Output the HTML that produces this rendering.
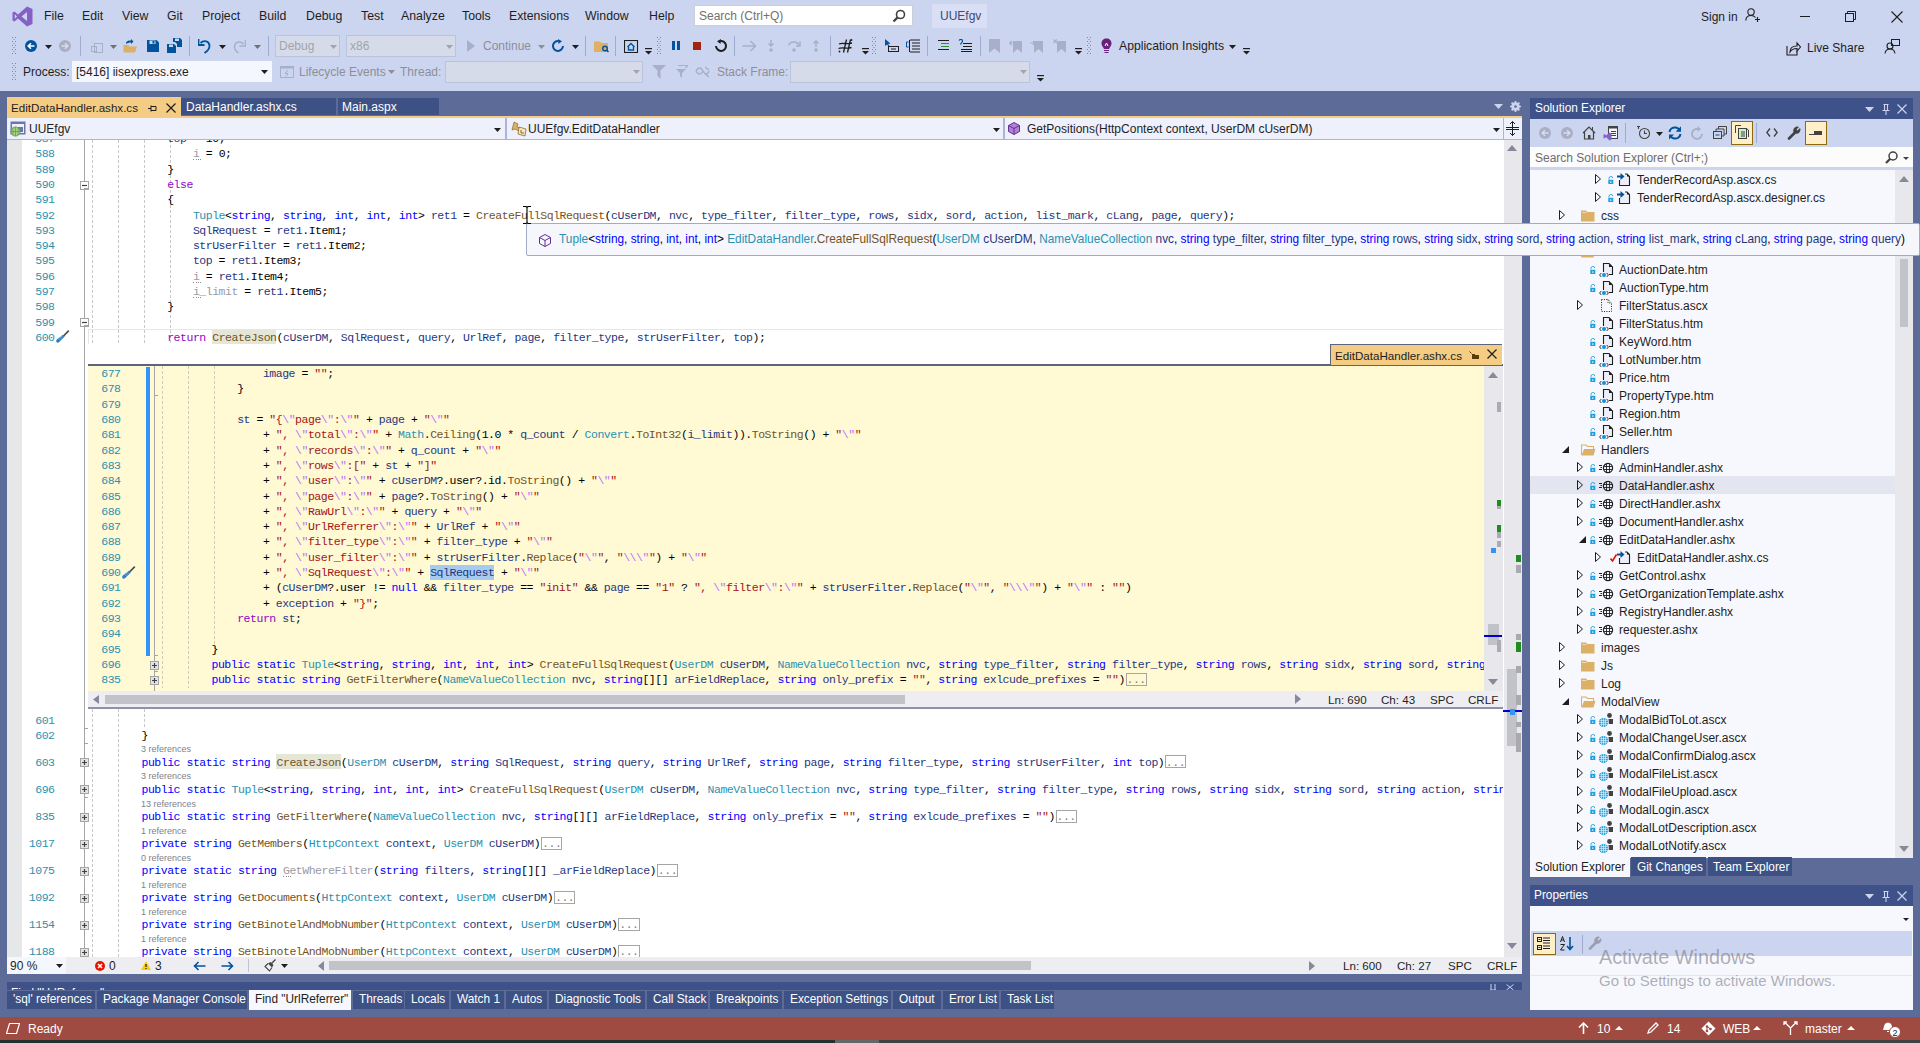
<!DOCTYPE html>
<html><head><meta charset="utf-8"><style>
html,body{margin:0;padding:0;}
body{width:1920px;height:1043px;overflow:hidden;position:relative;background:#5D6B99;font-family:"Liberation Sans", sans-serif;}
.a{position:absolute;}
.t{white-space:pre;}
.s{font-family:"Liberation Sans", sans-serif;}
.m{font-family:"Liberation Mono", monospace;}
.code{font-family:"Liberation Mono", monospace;font-size:11.5px;letter-spacing:-0.471px;white-space:pre;line-height:11.5px;}
</style></head><body>
<div class="a" style="left:0px;top:0px;width:1920px;height:91px;background:#CCD5F0;"></div><svg class="a" style="left:12px;top:6px;" width="21" height="21" viewBox="0 0 21 21"><path d="M15 0.5 L20.5 3 V18 L15 20.5 L6 12.5 L2.5 15.5 L0.5 14.5 V6.5 L2.5 5.5 L6 8.5 Z M15 6 L9.5 10.5 L15 15 Z M2.8 8.2 V12.8 L5 10.5 Z" fill="#8661C5" fill-rule="evenodd"/></svg><div class="a t s " style="left:44px;top:9.59px;font-size:12.3px;line-height:12.3px;color:#1E1E1E;">File</div><div class="a t s " style="left:82px;top:9.59px;font-size:12.3px;line-height:12.3px;color:#1E1E1E;">Edit</div><div class="a t s " style="left:122px;top:9.59px;font-size:12.3px;line-height:12.3px;color:#1E1E1E;">View</div><div class="a t s " style="left:167px;top:9.59px;font-size:12.3px;line-height:12.3px;color:#1E1E1E;">Git</div><div class="a t s " style="left:202px;top:9.59px;font-size:12.3px;line-height:12.3px;color:#1E1E1E;">Project</div><div class="a t s " style="left:259px;top:9.59px;font-size:12.3px;line-height:12.3px;color:#1E1E1E;">Build</div><div class="a t s " style="left:306px;top:9.59px;font-size:12.3px;line-height:12.3px;color:#1E1E1E;">Debug</div><div class="a t s " style="left:361px;top:9.59px;font-size:12.3px;line-height:12.3px;color:#1E1E1E;">Test</div><div class="a t s " style="left:401px;top:9.59px;font-size:12.3px;line-height:12.3px;color:#1E1E1E;">Analyze</div><div class="a t s " style="left:462px;top:9.59px;font-size:12.3px;line-height:12.3px;color:#1E1E1E;">Tools</div><div class="a t s " style="left:509px;top:9.59px;font-size:12.3px;line-height:12.3px;color:#1E1E1E;">Extensions</div><div class="a t s " style="left:585px;top:9.59px;font-size:12.3px;line-height:12.3px;color:#1E1E1E;">Window</div><div class="a t s " style="left:649px;top:9.59px;font-size:12.3px;line-height:12.3px;color:#1E1E1E;">Help</div><div class="a" style="left:694px;top:5px;width:219px;height:21px;background:#FFFFFF;box-sizing:border-box;border:1px solid #CCCEDB;"></div><div class="a t s " style="left:699px;top:9.84px;font-size:12px;line-height:12px;color:#717171;">Search (Ctrl+Q)</div><svg class="a" style="left:892px;top:9px;" width="14" height="14" viewBox="0 0 14 14"><circle cx="8.5" cy="5.5" r="4" fill="none" stroke="#424242" stroke-width="1.6"/><path d="M5.6 8.4 L1.5 12.5" stroke="#424242" stroke-width="2.2"/></svg><div class="a" style="left:932px;top:4px;width:55px;height:24px;background:#D9DFF4;"></div><div class="a t s " style="left:940px;top:9.84px;font-size:12px;line-height:12px;color:#3A4A7A;">UUEfgv</div><div class="a t s " style="left:1701px;top:10.84px;font-size:12px;line-height:12px;color:#1E1E1E;">Sign in</div><svg class="a" style="left:1745px;top:8px;" width="16" height="14" viewBox="0 0 16 14"><circle cx="6" cy="4" r="3.2" fill="none" stroke="#1E1E1E" stroke-width="1.1"/><path d="M0.8 12.5 C1 8.5 3.5 7.5 6 7.5 C8 7.5 9.5 8.2 10.5 9.5" fill="none" stroke="#1E1E1E" stroke-width="1.1"/><path d="M12.5 9 V14 M10 11.5 H15" stroke="#1E1E1E" stroke-width="1.1"/></svg><div class="a" style="left:1800px;top:16px;width:10px;height:1px;background:#1E1E1E;"></div><svg class="a" style="left:1845px;top:11px;" width="11" height="11" viewBox="0 0 11 11"><rect x="0.5" y="2.5" width="8" height="8" fill="none" stroke="#1E1E1E"/><path d="M2.5 2.5 V0.5 H10.5 V8.5 H8.5" fill="none" stroke="#1E1E1E"/></svg><svg class="a" style="left:1891px;top:11px;" width="12" height="12" viewBox="0 0 12 12"><path d="M0.5 0.5 L11.5 11.5 M11.5 0.5 L0.5 11.5" stroke="#1E1E1E" stroke-width="1.1"/></svg><svg class="a" style="left:1786px;top:41px;" width="15" height="15" viewBox="0 0 15 15"><path d="M1 5 V14 H11 V10" fill="none" stroke="#1E1E1E" stroke-width="1.1"/><path d="M4 11 C4 7 7 5 11 5 V2 L14.5 6 L11 10 V7.5 C8 7.5 5.5 8.5 4 11 Z" fill="none" stroke="#1E1E1E" stroke-width="1.1"/></svg><div class="a t s " style="left:1807px;top:41.84px;font-size:12px;line-height:12px;color:#1E1E1E;">Live Share</div><svg class="a" style="left:1884px;top:38px;" width="17" height="17" viewBox="0 0 17 17"><rect x="7.5" y="1.5" width="8" height="6" fill="none" stroke="#1E1E1E"/><circle cx="6" cy="8" r="3" fill="none" stroke="#1E1E1E" stroke-width="1.1"/><path d="M1 15.5 C1.5 12 3.5 11 6 11 C8.5 11 10.5 12 11 15.5" fill="none" stroke="#1E1E1E" stroke-width="1.1"/></svg><svg class="a" style="left:12px;top:37px;" width="5" height="18" viewBox="0 0 5 18"><rect x="0" y="0" width="1" height="1" fill="#7A86AE"/><rect x="3" y="0" width="1" height="1" fill="#7A86AE"/><rect x="1.5" y="2" width="1" height="1" fill="#7A86AE"/><rect x="0" y="4" width="1" height="1" fill="#7A86AE"/><rect x="3" y="4" width="1" height="1" fill="#7A86AE"/><rect x="1.5" y="6" width="1" height="1" fill="#7A86AE"/><rect x="0" y="8" width="1" height="1" fill="#7A86AE"/><rect x="3" y="8" width="1" height="1" fill="#7A86AE"/><rect x="1.5" y="10" width="1" height="1" fill="#7A86AE"/><rect x="0" y="12" width="1" height="1" fill="#7A86AE"/><rect x="3" y="12" width="1" height="1" fill="#7A86AE"/><rect x="1.5" y="14" width="1" height="1" fill="#7A86AE"/><rect x="0" y="16" width="1" height="1" fill="#7A86AE"/><rect x="3" y="16" width="1" height="1" fill="#7A86AE"/><rect x="1.5" y="18" width="1" height="1" fill="#7A86AE"/></svg><svg class="a" style="left:25px;top:40px;" width="12" height="12" viewBox="0 0 12 12"><circle cx="6" cy="6" r="6" fill="#00539C"/><path d="M9.5 6 H3.5 M6 3.2 L3.2 6 L6 8.8" fill="none" stroke="#fff" stroke-width="1.6"/></svg><svg class="a" style="left:45px;top:45px;" width="7" height="4" viewBox="0 0 7 4"><path d="M0 0 H7 L3.5 4 Z" fill="#1E1E1E"/></svg><svg class="a" style="left:59px;top:40px;" width="12" height="12" viewBox="0 0 12 12"><circle cx="6" cy="6" r="6" fill="#A8AFC6"/><path d="M2.5 6 H8.5 M6 3.2 L8.8 6 L6 8.8" fill="none" stroke="#D8DCEA" stroke-width="1.6"/></svg><div class="a" style="left:80px;top:36px;width:1px;height:20px;background:#A0ABD0;"></div><svg class="a" style="left:90px;top:39px;" width="14" height="14" viewBox="0 0 14 14"><rect x="4.5" y="4.5" width="8" height="9" fill="none" stroke="#A8AFC6"/><rect x="1.5" y="7.5" width="5" height="5" fill="none" stroke="#A8AFC6"/><path d="M3 1 L4 3 M1 3 L3 4" stroke="#C9CEDD"/></svg><svg class="a" style="left:110px;top:45px;" width="7" height="4" viewBox="0 0 7 4"><path d="M0 0 H7 L3.5 4 Z" fill="#717171"/></svg><svg class="a" style="left:123px;top:39px;" width="15" height="14" viewBox="0 0 15 14"><path d="M0.5 6 H5 L6.5 7.5 H14 L12 13.5 H0.5 Z" fill="#DCB067"/><path d="M3 5 C3 2 5 1.5 8 1.5 V0 L10.5 2.5 L8 5 V3.5 C6 3.5 4.5 4 3 5 Z" fill="#00539C"/></svg><svg class="a" style="left:147px;top:40px;" width="12" height="12" viewBox="0 0 12 12"><path d="M0 0 H9.5 L12 2.5 V12 H0 Z" fill="#00539C"/><rect x="2.5" y="0.5" width="6" height="3.5" fill="#CCD5F0"/><rect x="5.5" y="1" width="2" height="2.5" fill="#00539C"/></svg><svg class="a" style="left:167px;top:38px;" width="16" height="15" viewBox="0 0 16 15"><path d="M0 6 H7 L9 8 V15 H0 Z" fill="#00539C"/><path d="M6 0 H13 L15 2 V9 H10 V6 L8 4 H6 Z" fill="#00539C"/><rect x="8" y="0.5" width="4" height="2.5" fill="#CCD5F0"/><rect x="2" y="6.5" width="4" height="2.5" fill="#CCD5F0"/></svg><div class="a" style="left:189px;top:36px;width:1px;height:20px;background:#A0ABD0;"></div><svg class="a" style="left:198px;top:38px;" width="13" height="16" viewBox="0 0 13 16"><path d="M2.5 5 C6 1.5 11.5 3 11.5 8 C11.5 11 9.5 13 6.5 15" fill="none" stroke="#00539C" stroke-width="1.8"/><path d="M0.5 1 V7 H6.5" fill="none" stroke="#00539C" stroke-width="1.8"/></svg><svg class="a" style="left:219px;top:45px;" width="7" height="4" viewBox="0 0 7 4"><path d="M0 0 H7 L3.5 4 Z" fill="#1E1E1E"/></svg><svg class="a" style="left:233px;top:39px;" width="13" height="14" viewBox="0 0 13 14"><path d="M10.5 5 C7 1.5 1.5 3 1.5 8 C1.5 11 3.5 13 6.5 15" fill="none" stroke="#A8AFC6" stroke-width="1.6"/><path d="M12.5 1 V7 H6.5" fill="none" stroke="#A8AFC6" stroke-width="1.6"/></svg><svg class="a" style="left:254px;top:45px;" width="7" height="4" viewBox="0 0 7 4"><path d="M0 0 H7 L3.5 4 Z" fill="#717171"/></svg><div class="a" style="left:268px;top:36px;width:1px;height:20px;background:#A0ABD0;"></div><div class="a" style="left:275px;top:35px;width:65px;height:22px;background:#D6DBE9;box-sizing:border-box;border:1px solid #BAC2DC;"></div><div class="a t s " style="left:279px;top:40.14px;font-size:12px;line-height:12px;color:#A2A4AC;">Debug</div><svg class="a" style="left:330px;top:45px;" width="7" height="4" viewBox="0 0 7 4"><path d="M0 0 H7 L3.5 4 Z" fill="#A2A4AC"/></svg><div class="a" style="left:346px;top:35px;width:110px;height:22px;background:#D6DBE9;box-sizing:border-box;border:1px solid #BAC2DC;"></div><div class="a t s " style="left:350px;top:40.14px;font-size:12px;line-height:12px;color:#A2A4AC;">x86</div><svg class="a" style="left:446px;top:45px;" width="7" height="4" viewBox="0 0 7 4"><path d="M0 0 H7 L3.5 4 Z" fill="#A2A4AC"/></svg><svg class="a" style="left:467px;top:40px;" width="8" height="12" viewBox="0 0 8 12"><path d="M0 0 L8 6 L0 12 Z" fill="#A8AFC6"/></svg><div class="a t s " style="left:483px;top:40.14px;font-size:12px;line-height:12px;color:#8C8E98;">Continue</div><svg class="a" style="left:538px;top:45px;" width="7" height="4" viewBox="0 0 7 4"><path d="M0 0 H7 L3.5 4 Z" fill="#8C8E98"/></svg><svg class="a" style="left:552px;top:39px;" width="14" height="14" viewBox="0 0 14 14"><path d="M11 7 A5 5 0 1 1 7 2" fill="none" stroke="#00539C" stroke-width="2"/><path d="M6 0 L10 2.2 L6.5 5 Z" fill="#00539C"/></svg><svg class="a" style="left:572px;top:45px;" width="7" height="4" viewBox="0 0 7 4"><path d="M0 0 H7 L3.5 4 Z" fill="#1E1E1E"/></svg><div class="a" style="left:585px;top:36px;width:1px;height:20px;background:#A0ABD0;"></div><svg class="a" style="left:594px;top:40px;" width="16" height="13" viewBox="0 0 16 13"><path d="M0 1.5 H6 L7.5 3 H14 V12 H0 Z" fill="#DCB067"/><circle cx="11" cy="8.5" r="2.3" fill="none" stroke="#00539C" stroke-width="1.4"/><path d="M12.5 10 L14.5 12" stroke="#00539C" stroke-width="1.6"/></svg><div class="a" style="left:615px;top:36px;width:1px;height:20px;background:#A0ABD0;"></div><svg class="a" style="left:624px;top:40px;" width="15" height="13" viewBox="0 0 15 13"><rect x="0.5" y="0.5" width="13" height="12" fill="none" stroke="#1E1E1E" stroke-width="1.1"/><path d="M3.5 7 L7 3.5 L10.5 7 M4.5 6 V10 H9.5 V6" fill="none" stroke="#00539C" stroke-width="1.4"/></svg><svg class="a" style="left:645px;top:48px;" width="7" height="7" viewBox="0 0 7 7"><rect x="0" y="0" width="7" height="1.2" fill="#1E1E1E"/><path d="M0 3 H7 L3.5 6.5 Z" fill="#1E1E1E"/></svg><svg class="a" style="left:657px;top:37px;" width="5" height="18" viewBox="0 0 5 18"><rect x="0" y="0" width="1" height="1" fill="#7A86AE"/><rect x="3" y="0" width="1" height="1" fill="#7A86AE"/><rect x="1.5" y="2" width="1" height="1" fill="#7A86AE"/><rect x="0" y="4" width="1" height="1" fill="#7A86AE"/><rect x="3" y="4" width="1" height="1" fill="#7A86AE"/><rect x="1.5" y="6" width="1" height="1" fill="#7A86AE"/><rect x="0" y="8" width="1" height="1" fill="#7A86AE"/><rect x="3" y="8" width="1" height="1" fill="#7A86AE"/><rect x="1.5" y="10" width="1" height="1" fill="#7A86AE"/><rect x="0" y="12" width="1" height="1" fill="#7A86AE"/><rect x="3" y="12" width="1" height="1" fill="#7A86AE"/><rect x="1.5" y="14" width="1" height="1" fill="#7A86AE"/><rect x="0" y="16" width="1" height="1" fill="#7A86AE"/><rect x="3" y="16" width="1" height="1" fill="#7A86AE"/><rect x="1.5" y="18" width="1" height="1" fill="#7A86AE"/></svg><div class="a" style="left:672px;top:41px;width:3px;height:9px;background:#00539C;"></div><div class="a" style="left:677px;top:41px;width:3px;height:9px;background:#00539C;"></div><div class="a" style="left:693px;top:42px;width:8px;height:8px;background:#A1260D;"></div><svg class="a" style="left:713px;top:39px;" width="14" height="14" viewBox="0 0 14 14"><path d="M3 7 A5 5 0 1 0 7 2" fill="none" stroke="#1E1E1E" stroke-width="2"/><path d="M8 0 L4 2.2 L7.5 5 Z" fill="#1E1E1E"/></svg><div class="a" style="left:734px;top:36px;width:1px;height:20px;background:#A0ABD0;"></div><svg class="a" style="left:742px;top:40px;" width="15" height="12" viewBox="0 0 15 12"><path d="M0.5 6 H13.5 M8.5 1 L13.5 6 L8.5 11" fill="none" stroke="#A8AFC6" stroke-width="1.5"/></svg><svg class="a" style="left:767px;top:40px;" width="8" height="12" viewBox="0 0 8 12"><path d="M4 0 V6 M1.5 3.5 L4 6 L6.5 3.5" fill="none" stroke="#A8AFC6" stroke-width="1.5"/><circle cx="4" cy="10" r="1.8" fill="#A8AFC6"/></svg><svg class="a" style="left:788px;top:40px;" width="13" height="12" viewBox="0 0 13 12"><path d="M0.5 5.5 C2 1 9 1 11 5" fill="none" stroke="#A8AFC6" stroke-width="1.5"/><path d="M12 1.5 V6 H8" fill="none" stroke="#A8AFC6" stroke-width="1.5"/><circle cx="6" cy="10" r="1.8" fill="#A8AFC6"/></svg><svg class="a" style="left:812px;top:40px;" width="8" height="12" viewBox="0 0 8 12"><path d="M4 7 V1 M1.5 3.5 L4 1 L6.5 3.5" fill="none" stroke="#A8AFC6" stroke-width="1.5"/><circle cx="4" cy="10" r="1.8" fill="#A8AFC6"/></svg><div class="a" style="left:830px;top:36px;width:1px;height:20px;background:#A0ABD0;"></div><svg class="a" style="left:838px;top:39px;" width="15" height="14" viewBox="0 0 15 14"><path d="M5.5 13.5 L8.5 0.5 M9.5 13.5 L12.5 0.5 M1 5 C4 3.5 8 5.5 14 4 M0.5 9.5 C4 8 8 10 13.5 8.5" fill="none" stroke="#1E1E1E" stroke-width="1.3"/><circle cx="1.5" cy="12.5" r="0.9" fill="#1E1E1E"/><circle cx="13.5" cy="1" r="0.9" fill="#1E1E1E"/></svg><svg class="a" style="left:862px;top:48px;" width="7" height="7" viewBox="0 0 7 7"><rect x="0" y="0" width="7" height="1.2" fill="#1E1E1E"/><path d="M0 3 H7 L3.5 6.5 Z" fill="#1E1E1E"/></svg><svg class="a" style="left:872px;top:37px;" width="5" height="18" viewBox="0 0 5 18"><rect x="0" y="0" width="1" height="1" fill="#7A86AE"/><rect x="3" y="0" width="1" height="1" fill="#7A86AE"/><rect x="1.5" y="2" width="1" height="1" fill="#7A86AE"/><rect x="0" y="4" width="1" height="1" fill="#7A86AE"/><rect x="3" y="4" width="1" height="1" fill="#7A86AE"/><rect x="1.5" y="6" width="1" height="1" fill="#7A86AE"/><rect x="0" y="8" width="1" height="1" fill="#7A86AE"/><rect x="3" y="8" width="1" height="1" fill="#7A86AE"/><rect x="1.5" y="10" width="1" height="1" fill="#7A86AE"/><rect x="0" y="12" width="1" height="1" fill="#7A86AE"/><rect x="3" y="12" width="1" height="1" fill="#7A86AE"/><rect x="1.5" y="14" width="1" height="1" fill="#7A86AE"/><rect x="0" y="16" width="1" height="1" fill="#7A86AE"/><rect x="3" y="16" width="1" height="1" fill="#7A86AE"/><rect x="1.5" y="18" width="1" height="1" fill="#7A86AE"/></svg><svg class="a" style="left:884px;top:39px;" width="15" height="14" viewBox="0 0 15 14"><path d="M1 0 L1 7 L3 5.5 L5 8 L6 7.3 L4 5 L6.5 4.5 Z" fill="#00539C"/><rect x="4.5" y="7.5" width="10" height="5" fill="none" stroke="#1E1E1E"/><path d="M7 10 H12" stroke="#1E1E1E"/></svg><svg class="a" style="left:906px;top:39px;" width="15" height="14" viewBox="0 0 15 14"><path d="M4 1 H14 M6 4 H14 M6 7 H14 M6 10 H14 M4 13 H14 M3.5 1 V13" fill="none" stroke="#1E1E1E" stroke-width="1"/><path d="M0.5 3 V8 H2.5 M0.5 3 H2.5" fill="none" stroke="#00539C"/></svg><div class="a" style="left:927px;top:36px;width:1px;height:20px;background:#A0ABD0;"></div><svg class="a" style="left:938px;top:40px;" width="11" height="11" viewBox="0 0 11 11"><path d="M0 0.5 H11 M3 3.5 H11 M3 6.5 H11 M0 9.5 H11" stroke="#1E1E1E"/><path d="M3 3.5 H11 M3 6.5 H11" stroke="#388A34"/></svg><svg class="a" style="left:958px;top:39px;" width="14" height="13" viewBox="0 0 14 13"><path d="M5 4.5 H14 M5 7.5 H14 M3 10.5 H14 M3 12.5 H14" stroke="#1E1E1E"/><path d="M1 1.5 C2 0 4.5 0 4.5 2 C4.5 3.5 3 4 2.5 5.5" fill="none" stroke="#00539C" stroke-width="1.2"/></svg><div class="a" style="left:980px;top:36px;width:1px;height:20px;background:#A0ABD0;"></div><svg class="a" style="left:989px;top:39px;" width="11" height="14" viewBox="0 0 11 14"><path d="M0 0 H11 V14 L5.5 9.5 L0 14 Z" fill="#A8AFC6"/></svg><svg class="a" style="left:1009px;top:39px;" width="13" height="14" viewBox="0 0 13 14"><path d="M4 2 H13 V14 L8.5 10 L4 14 Z" fill="#A8AFC6"/><path d="M0.5 4 H5 M2.5 2 L0.5 4 L2.5 6" fill="none" stroke="#A8AFC6" stroke-width="1.2"/></svg><svg class="a" style="left:1030px;top:39px;" width="13" height="14" viewBox="0 0 13 14"><path d="M4 2 H13 V14 L8.5 10 L4 14 Z" fill="#A8AFC6"/><path d="M0 4 H5 M3 2 L5 4 L3 6" fill="none" stroke="#A8AFC6" stroke-width="1.2"/></svg><svg class="a" style="left:1053px;top:39px;" width="13" height="14" viewBox="0 0 13 14"><path d="M4 2 H13 V14 L8.5 10 L4 14 Z" fill="#A8AFC6"/><path d="M0.5 0.5 L4 4 M4 0.5 L0.5 4" fill="none" stroke="#A8AFC6" stroke-width="1.2"/></svg><svg class="a" style="left:1075px;top:48px;" width="7" height="7" viewBox="0 0 7 7"><rect x="0" y="0" width="7" height="1.2" fill="#1E1E1E"/><path d="M0 3 H7 L3.5 6.5 Z" fill="#1E1E1E"/></svg><svg class="a" style="left:1087px;top:37px;" width="5" height="18" viewBox="0 0 5 18"><rect x="0" y="0" width="1" height="1" fill="#7A86AE"/><rect x="3" y="0" width="1" height="1" fill="#7A86AE"/><rect x="1.5" y="2" width="1" height="1" fill="#7A86AE"/><rect x="0" y="4" width="1" height="1" fill="#7A86AE"/><rect x="3" y="4" width="1" height="1" fill="#7A86AE"/><rect x="1.5" y="6" width="1" height="1" fill="#7A86AE"/><rect x="0" y="8" width="1" height="1" fill="#7A86AE"/><rect x="3" y="8" width="1" height="1" fill="#7A86AE"/><rect x="1.5" y="10" width="1" height="1" fill="#7A86AE"/><rect x="0" y="12" width="1" height="1" fill="#7A86AE"/><rect x="3" y="12" width="1" height="1" fill="#7A86AE"/><rect x="1.5" y="14" width="1" height="1" fill="#7A86AE"/><rect x="0" y="16" width="1" height="1" fill="#7A86AE"/><rect x="3" y="16" width="1" height="1" fill="#7A86AE"/><rect x="1.5" y="18" width="1" height="1" fill="#7A86AE"/></svg><svg class="a" style="left:1101px;top:38px;" width="11" height="16" viewBox="0 0 11 16"><path d="M5.5 0.5 C8.5 0.5 10.5 2.5 10.5 5.5 C10.5 8 8.5 9 8 11 H3 C2.5 9 0.5 8 0.5 5.5 C0.5 2.5 2.5 0.5 5.5 0.5 Z" fill="#68217A"/><path d="M3 12.5 H8 M3.5 14.5 H7.5" stroke="#68217A" stroke-width="1.2"/><path d="M4 8 L5.5 5 L7 8" fill="none" stroke="#fff"/></svg><div class="a t s " style="left:1119px;top:39.97px;font-size:12.2px;line-height:12.2px;color:#1E1E1E;">Application Insights</div><svg class="a" style="left:1229px;top:45px;" width="7" height="4" viewBox="0 0 7 4"><path d="M0 0 H7 L3.5 4 Z" fill="#1E1E1E"/></svg><svg class="a" style="left:1243px;top:48px;" width="7" height="7" viewBox="0 0 7 7"><rect x="0" y="0" width="7" height="1.2" fill="#1E1E1E"/><path d="M0 3 H7 L3.5 6.5 Z" fill="#1E1E1E"/></svg><svg class="a" style="left:12px;top:63px;" width="5" height="18" viewBox="0 0 5 18"><rect x="0" y="0" width="1" height="1" fill="#7A86AE"/><rect x="3" y="0" width="1" height="1" fill="#7A86AE"/><rect x="1.5" y="2" width="1" height="1" fill="#7A86AE"/><rect x="0" y="4" width="1" height="1" fill="#7A86AE"/><rect x="3" y="4" width="1" height="1" fill="#7A86AE"/><rect x="1.5" y="6" width="1" height="1" fill="#7A86AE"/><rect x="0" y="8" width="1" height="1" fill="#7A86AE"/><rect x="3" y="8" width="1" height="1" fill="#7A86AE"/><rect x="1.5" y="10" width="1" height="1" fill="#7A86AE"/><rect x="0" y="12" width="1" height="1" fill="#7A86AE"/><rect x="3" y="12" width="1" height="1" fill="#7A86AE"/><rect x="1.5" y="14" width="1" height="1" fill="#7A86AE"/><rect x="0" y="16" width="1" height="1" fill="#7A86AE"/><rect x="3" y="16" width="1" height="1" fill="#7A86AE"/><rect x="1.5" y="18" width="1" height="1" fill="#7A86AE"/></svg><div class="a t s " style="left:23px;top:65.84px;font-size:12px;line-height:12px;color:#1E1E1E;">Process:</div><div class="a" style="left:72px;top:61px;width:200px;height:21px;background:#F5F7FE;"></div><div class="a t s " style="left:76px;top:65.84px;font-size:12px;line-height:12px;color:#1E1E1E;">[5416] iisexpress.exe</div><svg class="a" style="left:261px;top:70px;" width="7" height="4" viewBox="0 0 7 4"><path d="M0 0 H7 L3.5 4 Z" fill="#1E1E1E"/></svg><svg class="a" style="left:280px;top:66px;" width="14" height="12" viewBox="0 0 14 12"><rect x="0.5" y="0.5" width="13" height="11" fill="none" stroke="#A8AFC6"/><rect x="0.5" y="0.5" width="13" height="2" fill="#A8AFC6"/><path d="M8 4 L5 7.5 H8 L6 10.5" fill="none" stroke="#A8AFC6"/></svg><div class="a t s " style="left:299px;top:65.84px;font-size:12px;line-height:12px;color:#8C8E98;">Lifecycle Events</div><svg class="a" style="left:388px;top:70px;" width="7" height="4" viewBox="0 0 7 4"><path d="M0 0 H7 L3.5 4 Z" fill="#8C8E98"/></svg><div class="a t s " style="left:400px;top:65.84px;font-size:12px;line-height:12px;color:#8C8E98;">Thread:</div><div class="a" style="left:445px;top:61px;width:198px;height:22px;background:#D6DBE9;box-sizing:border-box;border:1px solid #BAC2DC;"></div><svg class="a" style="left:633px;top:70px;" width="7" height="4" viewBox="0 0 7 4"><path d="M0 0 H7 L3.5 4 Z" fill="#A2A4AC"/></svg><svg class="a" style="left:652px;top:65px;" width="14" height="14" viewBox="0 0 14 14"><path d="M0 0 H14 L8.5 5.5 V14 L5.5 11 V5.5 Z" fill="#A8AFC6"/></svg><svg class="a" style="left:673px;top:65px;" width="15" height="14" viewBox="0 0 15 14"><path d="M3 4 H13 L9 8 V13 L7 11 V8 Z" fill="#A8AFC6"/><path d="M5 0.5 H15 L12.5 3" fill="none" stroke="#A8AFC6" stroke-width="1.2"/></svg><svg class="a" style="left:695px;top:66px;" width="15" height="12" viewBox="0 0 15 12"><path d="M1 5 C3 1 6 1 8 5 C10 9 13 9 14 5 M1 5 C3 9 6 9 8 5 M10 1 L14 4 M10 8 L14 11" fill="none" stroke="#A8AFC6" stroke-width="1.4"/></svg><div class="a t s " style="left:717px;top:65.84px;font-size:12px;line-height:12px;color:#8C8E98;">Stack Frame:</div><div class="a" style="left:790px;top:61px;width:240px;height:22px;background:#D6DBE9;box-sizing:border-box;border:1px solid #BAC2DC;"></div><svg class="a" style="left:1020px;top:70px;" width="7" height="4" viewBox="0 0 7 4"><path d="M0 0 H7 L3.5 4 Z" fill="#A2A4AC"/></svg><svg class="a" style="left:1037px;top:75px;" width="7" height="7" viewBox="0 0 7 7"><rect x="0" y="0" width="7" height="1.2" fill="#1E1E1E"/><path d="M0 3 H7 L3.5 6.5 Z" fill="#1E1E1E"/></svg><div class="a" style="left:7px;top:97px;width:174px;height:21px;background:#F5CC84;"></div><div class="a t s " style="left:11px;top:102.18px;font-size:11.6px;line-height:11.6px;color:#1E1E1E;">EditDataHandler.ashx.cs</div><svg class="a" style="left:148px;top:105px;" width="9" height="7" viewBox="0 0 9 7"><path d="M0 3.5 H3 M3 0.5 V6.5 M3 1.5 H8 V5.5 H3" fill="none" stroke="#1E1E1E"/></svg><svg class="a" style="left:166px;top:103px;" width="10" height="10" viewBox="0 0 10 10"><path d="M0.5 0.5 L9.5 9.5 M9.5 0.5 L0.5 9.5" stroke="#1E1E1E" stroke-width="1.2"/></svg><div class="a" style="left:181px;top:98px;width:155px;height:17px;background:#3D5184;"></div><div class="a t s " style="left:186px;top:100.84px;font-size:12px;line-height:12px;color:#FFFFFF;">DataHandler.ashx.cs</div><div class="a" style="left:338px;top:98px;width:101px;height:17px;background:#3D5184;"></div><div class="a t s " style="left:342px;top:100.84px;font-size:12px;line-height:12px;color:#FFFFFF;">Main.aspx</div><svg class="a" style="left:1494px;top:104px;" width="9" height="5" viewBox="0 0 9 5"><path d="M0 0 H9 L4.5 5 Z" fill="#CED4EE"/></svg><svg class="a" style="left:1510px;top:101px;" width="11" height="11" viewBox="0 0 11 11"><circle cx="5.5" cy="5.5" r="3.2" fill="none" stroke="#CED4EE" stroke-width="2.2"/><path d="M5.5 0 V11 M0 5.5 H11 M1.6 1.6 L9.4 9.4 M9.4 1.6 L1.6 9.4" stroke="#CED4EE" stroke-width="1.6"/><circle cx="5.5" cy="5.5" r="1.3" fill="#5D6B99"/></svg><div class="a" style="left:7px;top:116px;width:1515px;height:2px;background:#F5CC84;"></div><div class="a" style="left:7px;top:118px;width:1515px;height:22px;background:#EEF1FB;"></div><div class="a" style="left:7px;top:139px;width:1515px;height:1px;background:#A9B6DA;"></div><div class="a" style="left:505px;top:118px;width:2px;height:21px;background:#A9B6DA;"></div><div class="a" style="left:1003px;top:118px;width:2px;height:21px;background:#A9B6DA;"></div><div class="a" style="left:1503px;top:118px;width:1px;height:21px;background:#A9B6DA;"></div><svg class="a" style="left:9px;top:120px;" width="18" height="17" viewBox="0 0 18 17"><rect x="1.5" y="1.5" width="15" height="13" fill="#6C76A8"/><rect x="3" y="4" width="12" height="9" fill="#EEF1FB"/><rect x="9" y="7" width="5" height="5" fill="#6C76A8"/><circle cx="6.5" cy="11.5" r="4.6" fill="#A6D58A" stroke="#5C9A46" stroke-width="0.9"/><path d="M2 11.5 H11 M6.5 7 V16 M4 7.8 V15.2 M9 7.8 V15.2" stroke="#5C9A46" stroke-width="0.7"/></svg><div class="a t s " style="left:29px;top:123.24px;font-size:12px;line-height:12px;color:#1E1E1E;">UUEfgv</div><svg class="a" style="left:494px;top:128px;" width="7" height="4" viewBox="0 0 7 4"><path d="M0 0 H7 L3.5 4 Z" fill="#1E1E1E"/></svg><svg class="a" style="left:511px;top:121px;" width="17" height="16" viewBox="0 0 17 16"><path d="M3 1 L7 3 L6 6 L9 7 L8 10 L4 8 L1 9 Z" fill="#DCB067" stroke="#8C6A2A" stroke-width="0.7"/><path d="M8 6 L15 8 L14 15 L7 13 Z" fill="#F5E7C4" stroke="#8C6A2A" stroke-width="0.8"/><path d="M10 9 V12 H13" fill="none" stroke="#8C6A2A"/></svg><div class="a t s " style="left:528px;top:123.24px;font-size:12px;line-height:12px;color:#1E1E1E;">UUEfgv.EditDataHandler</div><svg class="a" style="left:993px;top:128px;" width="7" height="4" viewBox="0 0 7 4"><path d="M0 0 H7 L3.5 4 Z" fill="#1E1E1E"/></svg><svg class="a" style="left:1008px;top:122px;" width="12" height="13" viewBox="0 0 12 13"><path d="M6 0.5 L11.5 3.5 V9.5 L6 12.5 L0.5 9.5 V3.5 Z" fill="#B180D7" stroke="#652D90"/><path d="M0.5 3.5 L6 6.5 L11.5 3.5 M6 6.5 V12.5" fill="none" stroke="#652D90"/></svg><div class="a t s " style="left:1027px;top:123.24px;font-size:12px;line-height:12px;color:#1E1E1E;">GetPositions(HttpContext context, UserDM cUserDM)</div><svg class="a" style="left:1493px;top:128px;" width="7" height="4" viewBox="0 0 7 4"><path d="M0 0 H7 L3.5 4 Z" fill="#1E1E1E"/></svg><svg class="a" style="left:1506px;top:121px;" width="13" height="15" viewBox="0 0 13 15"><path d="M0 6.5 H13 M0 8.5 H13 M6.5 0.5 V14.5 M4 3 L6.5 0.5 L9 3 M4 12 L6.5 14.5 L9 12" fill="none" stroke="#1E1E1E" stroke-width="1"/></svg><div class="a" style="left:7px;top:140px;width:1497px;height:817px;background:#FFFFFF;"></div><div class="a" style="left:7px;top:140px;width:15px;height:817px;background:#E6E7E8;"></div><div class="a" style="left:1504px;top:140px;width:18px;height:817px;background:#E8E8EC;"></div><div class="a" style="left:0;top:140px;width:1503px;height:204px;overflow:hidden;"><div class="a" style="left:88px;top:189px;width:1415px;height:15px;box-sizing:border-box;border:1px solid #E5E5EF;border-right:none;border-bottom:none;"></div><div class="a" style="left:92px;top:0px;width:1px;height:204px;background:repeating-linear-gradient(to bottom,#C8C8C8 0,#C8C8C8 3px,transparent 3px,transparent 5px);"></div><div class="a" style="left:118px;top:0px;width:1px;height:204px;background:repeating-linear-gradient(to bottom,#C8C8C8 0,#C8C8C8 3px,transparent 3px,transparent 5px);"></div><div class="a" style="left:144px;top:0px;width:1px;height:204px;background:repeating-linear-gradient(to bottom,#C8C8C8 0,#C8C8C8 3px,transparent 3px,transparent 5px);"></div><div class="a" style="left:170px;top:0px;width:1px;height:204px;background:repeating-linear-gradient(to bottom,#C8C8C8 0,#C8C8C8 3px,transparent 3px,transparent 5px);"></div><div class="a" style="left:84px;top:0px;width:1px;height:204px;background:#A5A5A5;"></div><div class="a t m " style="left:35.21px;top:-6.91px;font-size:11.5px;line-height:11.5px;color:#2B91AF;letter-spacing:-0.471px;">587</div><div class="a code" style="left:90px;top:-6.91px;"><span style="color:#000000">            </span><span style="color:#1F377F">top</span><span style="color:#000000"> = </span><span style="color:#000000">10</span><span style="color:#000000">;</span></div><div class="a t m " style="left:35.21px;top:8.39px;font-size:11.5px;line-height:11.5px;color:#2B91AF;letter-spacing:-0.471px;">588</div><div class="a code" style="left:90px;top:8.39px;"><span style="color:#000000">                </span><span style="color:#9A9AA6">i</span><span style="color:#000000"> = </span><span style="color:#000000">0</span><span style="color:#000000">;</span></div><div class="a t m " style="left:35.21px;top:23.69px;font-size:11.5px;line-height:11.5px;color:#2B91AF;letter-spacing:-0.471px;">589</div><div class="a code" style="left:90px;top:23.69px;"><span style="color:#000000">            }</span></div><div class="a t m " style="left:35.21px;top:38.99px;font-size:11.5px;line-height:11.5px;color:#2B91AF;letter-spacing:-0.471px;">590</div><div class="a code" style="left:90px;top:38.99px;"><span style="color:#000000">            </span><span style="color:#8F08C4">else</span></div><div class="a t m " style="left:35.21px;top:54.29px;font-size:11.5px;line-height:11.5px;color:#2B91AF;letter-spacing:-0.471px;">591</div><div class="a code" style="left:90px;top:54.29px;"><span style="color:#000000">            {</span></div><div class="a t m " style="left:35.21px;top:69.59px;font-size:11.5px;line-height:11.5px;color:#2B91AF;letter-spacing:-0.471px;">592</div><div class="a code" style="left:90px;top:69.59px;"><span style="color:#000000">                </span><span style="color:#2B91AF">Tuple</span><span style="color:#000000">&lt;</span><span style="color:#0000FF">string</span><span style="color:#000000">, </span><span style="color:#0000FF">string</span><span style="color:#000000">, </span><span style="color:#0000FF">int</span><span style="color:#000000">, </span><span style="color:#0000FF">int</span><span style="color:#000000">, </span><span style="color:#0000FF">int</span><span style="color:#000000">&gt; </span><span style="color:#1F377F">ret1</span><span style="color:#000000"> = </span><span style="color:#74531F">CreateFullSqlRequest</span><span style="color:#000000">(</span><span style="color:#1F377F">cUserDM</span><span style="color:#000000">, </span><span style="color:#1F377F">nvc</span><span style="color:#000000">, </span><span style="color:#1F377F">type_filter</span><span style="color:#000000">, </span><span style="color:#1F377F">filter_type</span><span style="color:#000000">, </span><span style="color:#1F377F">rows</span><span style="color:#000000">, </span><span style="color:#1F377F">sidx</span><span style="color:#000000">, </span><span style="color:#1F377F">sord</span><span style="color:#000000">, </span><span style="color:#1F377F">action</span><span style="color:#000000">, </span><span style="color:#1F377F">list_mark</span><span style="color:#000000">, </span><span style="color:#1F377F">cLang</span><span style="color:#000000">, </span><span style="color:#1F377F">page</span><span style="color:#000000">, </span><span style="color:#1F377F">query</span><span style="color:#000000">);</span></div><div class="a t m " style="left:35.21px;top:84.89px;font-size:11.5px;line-height:11.5px;color:#2B91AF;letter-spacing:-0.471px;">593</div><div class="a code" style="left:90px;top:84.89px;"><span style="color:#000000">                </span><span style="color:#1F377F">SqlRequest</span><span style="color:#000000"> = </span><span style="color:#1F377F">ret1</span><span style="color:#000000">.</span><span style="color:#000000">Item1</span><span style="color:#000000">;</span></div><div class="a t m " style="left:35.21px;top:100.19px;font-size:11.5px;line-height:11.5px;color:#2B91AF;letter-spacing:-0.471px;">594</div><div class="a code" style="left:90px;top:100.19px;"><span style="color:#000000">                </span><span style="color:#1F377F">strUserFilter</span><span style="color:#000000"> = </span><span style="color:#1F377F">ret1</span><span style="color:#000000">.</span><span style="color:#000000">Item2</span><span style="color:#000000">;</span></div><div class="a t m " style="left:35.21px;top:115.49px;font-size:11.5px;line-height:11.5px;color:#2B91AF;letter-spacing:-0.471px;">595</div><div class="a code" style="left:90px;top:115.49px;"><span style="color:#000000">                </span><span style="color:#1F377F">top</span><span style="color:#000000"> = </span><span style="color:#1F377F">ret1</span><span style="color:#000000">.</span><span style="color:#000000">Item3</span><span style="color:#000000">;</span></div><div class="a t m " style="left:35.21px;top:130.79px;font-size:11.5px;line-height:11.5px;color:#2B91AF;letter-spacing:-0.471px;">596</div><div class="a code" style="left:90px;top:130.79px;"><span style="color:#000000">                </span><span style="color:#9A9AA6">i</span><span style="color:#000000"> = </span><span style="color:#1F377F">ret1</span><span style="color:#000000">.</span><span style="color:#000000">Item4</span><span style="color:#000000">;</span></div><div class="a t m " style="left:35.21px;top:146.09px;font-size:11.5px;line-height:11.5px;color:#2B91AF;letter-spacing:-0.471px;">597</div><div class="a code" style="left:90px;top:146.09px;"><span style="color:#000000">                </span><span style="color:#9A9AA6">i_limit</span><span style="color:#000000"> = </span><span style="color:#1F377F">ret1</span><span style="color:#000000">.</span><span style="color:#000000">Item5</span><span style="color:#000000">;</span></div><div class="a t m " style="left:35.21px;top:161.39px;font-size:11.5px;line-height:11.5px;color:#2B91AF;letter-spacing:-0.471px;">598</div><div class="a code" style="left:90px;top:161.39px;"><span style="color:#000000">            }</span></div><div class="a t m " style="left:35.21px;top:176.69px;font-size:11.5px;line-height:11.5px;color:#2B91AF;letter-spacing:-0.471px;">599</div><div class="a code" style="left:90px;top:176.69px;"></div><div class="a t m " style="left:35.21px;top:191.99px;font-size:11.5px;line-height:11.5px;color:#2B91AF;letter-spacing:-0.471px;">600</div><div class="a" style="left:212.17px;top:189.8px;width:64.3px;height:15px;background:#E4E6D6;"></div><div class="a code" style="left:90px;top:191.99px;"><span style="color:#000000">            </span><span style="color:#8F08C4">return</span><span style="color:#000000"> </span><span style="color:#74531F">CreateJson</span><span style="color:#000000">(</span><span style="color:#1F377F">cUserDM</span><span style="color:#000000">, </span><span style="color:#1F377F">SqlRequest</span><span style="color:#000000">, </span><span style="color:#1F377F">query</span><span style="color:#000000">, </span><span style="color:#1F377F">UrlRef</span><span style="color:#000000">, </span><span style="color:#1F377F">page</span><span style="color:#000000">, </span><span style="color:#1F377F">filter_type</span><span style="color:#000000">, </span><span style="color:#1F377F">strUserFilter</span><span style="color:#000000">, </span><span style="color:#1F377F">top</span><span style="color:#000000">);</span></div><div class="a" style="left:193.38px;top:19.19999999999999px;width:1px;height:1px;background:#8A8A8A;"></div><div class="a" style="left:195.57999999999998px;top:19.19999999999999px;width:1px;height:1px;background:#8A8A8A;"></div><div class="a" style="left:197.78px;top:19.19999999999999px;width:1px;height:1px;background:#8A8A8A;"></div><div class="a" style="left:199.98px;top:19.19999999999999px;width:1px;height:1px;background:#8A8A8A;"></div><div class="a" style="left:193.38px;top:141.60000000000002px;width:1px;height:1px;background:#8A8A8A;"></div><div class="a" style="left:195.57999999999998px;top:141.60000000000002px;width:1px;height:1px;background:#8A8A8A;"></div><div class="a" style="left:197.78px;top:141.60000000000002px;width:1px;height:1px;background:#8A8A8A;"></div><div class="a" style="left:199.98px;top:141.60000000000002px;width:1px;height:1px;background:#8A8A8A;"></div><div class="a" style="left:193.38px;top:156.89999999999998px;width:1px;height:1px;background:#8A8A8A;"></div><div class="a" style="left:195.57999999999998px;top:156.89999999999998px;width:1px;height:1px;background:#8A8A8A;"></div><div class="a" style="left:197.78px;top:156.89999999999998px;width:1px;height:1px;background:#8A8A8A;"></div><div class="a" style="left:199.98px;top:156.89999999999998px;width:1px;height:1px;background:#8A8A8A;"></div><svg class="a" style="left:80px;top:41px;" width="9" height="9" viewBox="0 0 9 9"><rect x="0.5" y="0.5" width="8" height="8" fill="#FFFFFF" stroke="#A5A5A5"/><path d="M2 4.5 H7" stroke="#424242" stroke-width="1.2"/></svg><svg class="a" style="left:80px;top:178px;" width="9" height="9" viewBox="0 0 9 9"><rect x="0.5" y="0.5" width="8" height="8" fill="#FFFFFF" stroke="#A5A5A5"/><path d="M2 4.5 H7" stroke="#424242" stroke-width="1.2"/></svg><div class="a" style="left:84px;top:47.5px;width:4px;height:1px;background:#A5A5A5;"></div><div class="a" style="left:84px;top:185.2px;width:4px;height:1px;background:#A5A5A5;"></div><svg class="a" style="left:56px;top:190px;" width="14" height="13" viewBox="0 0 14 13"><path d="M12.3 1.2 L7.5 6" stroke="#4A4A4A" stroke-width="1.7" stroke-linecap="round"/><path d="M7 4.8 L8.7 6.5 L3.2 12 C2.4 12.8 1.2 12.8 0.6 12.2 C0 11.6 0 10.4 0.8 9.6 Z" fill="#2F7BC4"/><path d="M2.6 8.3 L4.2 9.9 M3.9 7 L5.5 8.6 M5.2 5.9 L6.7 7.4" stroke="#A9CCEB" stroke-width="0.7"/></svg></div><div class="a" style="left:84px;top:344px;width:1px;height:365px;background:#A5A5A5;"></div><div class="a" style="left:88px;top:364px;width:1415px;height:2px;background:#5A6580;"></div><div class="a" style="left:1330px;top:344px;width:172px;height:21px;background:#F5CC84;box-sizing:border-box;border:1px solid #5A6580;border-bottom:none;border-right:none;"></div><div class="a t s " style="left:1335px;top:350.18px;font-size:11.6px;line-height:11.6px;color:#1E1E1E;">EditDataHandler.ashx.cs</div><svg class="a" style="left:1469px;top:351px;" width="11" height="9" viewBox="0 0 11 9"><path d="M0.5 0.5 L2.5 2.5" stroke="#5C3B0A"/><path d="M3 3 H6 V4 H10 V8 H3 Z" fill="#5C3B0A"/></svg><svg class="a" style="left:1487px;top:349px;" width="10" height="10" viewBox="0 0 10 10"><path d="M0.5 0.5 L9.5 9.5 M9.5 0.5 L0.5 9.5" stroke="#1E1E1E" stroke-width="1.2"/></svg><div class="a" style="left:88px;top:366px;width:1396px;height:325px;background:#FFF9D4;"></div><div class="a" style="left:1484px;top:366px;width:19px;height:325px;background:#E8E8EC;"></div><svg class="a" style="left:1488px;top:372px;" width="10" height="6" viewBox="0 0 10 6"><path d="M0 6 L5 0 L10 6 Z" fill="#868999"/></svg><svg class="a" style="left:1488px;top:679px;" width="10" height="6" viewBox="0 0 10 6"><path d="M0 0 L5 6 L10 0 Z" fill="#868999"/></svg><div class="a" style="left:1497px;top:402px;width:4px;height:10px;background:#ABABB3;"></div><div class="a" style="left:1497px;top:500px;width:4px;height:6px;background:#1E8C1E;"></div><div class="a" style="left:1497px;top:506px;width:4px;height:3px;background:#ABABB3;"></div><div class="a" style="left:1497px;top:525px;width:4px;height:7px;background:#1E8C1E;"></div><div class="a" style="left:1497px;top:532px;width:4px;height:6px;background:#ABABB3;"></div><div class="a" style="left:1497px;top:541px;width:4px;height:6px;background:#ABABB3;"></div><div class="a" style="left:1491px;top:548px;width:5px;height:5px;background:#3294F7;"></div><div class="a" style="left:1488px;top:624px;width:11px;height:21px;background:#C2C3C9;"></div><div class="a" style="left:1484px;top:635px;width:18px;height:2px;background:#0000CD;"></div><div class="a" style="left:1497px;top:640px;width:4px;height:12px;background:#ABABB3;"></div><div class="a" style="left:88px;top:366px;width:1396px;height:325px;overflow:hidden;"><div class="a" style="left:74px;top:0px;width:1px;height:322px;background:repeating-linear-gradient(to bottom,#CFCBB4 0,#CFCBB4 3px,transparent 3px,transparent 5px);"></div><div class="a" style="left:100px;top:0px;width:1px;height:322px;background:repeating-linear-gradient(to bottom,#CFCBB4 0,#CFCBB4 3px,transparent 3px,transparent 5px);"></div><div class="a" style="left:126px;top:0px;width:1px;height:290px;background:repeating-linear-gradient(to bottom,#CFCBB4 0,#CFCBB4 3px,transparent 3px,transparent 5px);"></div><div class="a" style="left:66px;top:0px;width:1px;height:325px;background:#A5A5A5;"></div><div class="a" style="left:58px;top:1px;width:4px;height:289px;background:#3294F7;"></div><div class="a t m " style="left:13.21px;top:2.19px;font-size:11.5px;line-height:11.5px;color:#2B91AF;letter-spacing:-0.471px;">677</div><div class="a code" style="left:72px;top:2.19px;"><span style="color:#000000">                </span><span style="color:#1F377F">image</span><span style="color:#000000"> = </span><span style="color:#A31515">""</span><span style="color:#000000">;</span></div><div class="a t m " style="left:13.21px;top:17.49px;font-size:11.5px;line-height:11.5px;color:#2B91AF;letter-spacing:-0.471px;">678</div><div class="a code" style="left:72px;top:17.49px;"><span style="color:#000000">            }</span></div><div class="a t m " style="left:13.21px;top:32.79px;font-size:11.5px;line-height:11.5px;color:#2B91AF;letter-spacing:-0.471px;">679</div><div class="a code" style="left:72px;top:32.79px;"></div><div class="a t m " style="left:13.21px;top:48.09px;font-size:11.5px;line-height:11.5px;color:#2B91AF;letter-spacing:-0.471px;">680</div><div class="a code" style="left:72px;top:48.09px;"><span style="color:#000000">            </span><span style="color:#1F377F">st</span><span style="color:#000000"> = </span><span style="color:#A31515">"{</span><span style="color:#B776FB">\"</span><span style="color:#A31515">page</span><span style="color:#B776FB">\"</span><span style="color:#A31515">:</span><span style="color:#B776FB">\"</span><span style="color:#A31515">"</span><span style="color:#000000"> + </span><span style="color:#1F377F">page</span><span style="color:#000000"> + </span><span style="color:#A31515">"</span><span style="color:#B776FB">\"</span><span style="color:#A31515">"</span></div><div class="a t m " style="left:13.21px;top:63.39px;font-size:11.5px;line-height:11.5px;color:#2B91AF;letter-spacing:-0.471px;">681</div><div class="a code" style="left:72px;top:63.39px;"><span style="color:#000000">                + </span><span style="color:#A31515">", </span><span style="color:#B776FB">\"</span><span style="color:#A31515">total</span><span style="color:#B776FB">\"</span><span style="color:#A31515">:</span><span style="color:#B776FB">\"</span><span style="color:#A31515">"</span><span style="color:#000000"> + </span><span style="color:#2B91AF">Math</span><span style="color:#000000">.</span><span style="color:#74531F">Ceiling</span><span style="color:#000000">(</span><span style="color:#000000">1.0</span><span style="color:#000000"> * </span><span style="color:#1F377F">q_count</span><span style="color:#000000"> / </span><span style="color:#2B91AF">Convert</span><span style="color:#000000">.</span><span style="color:#74531F">ToInt32</span><span style="color:#000000">(</span><span style="color:#1F377F">i_limit</span><span style="color:#000000">)).</span><span style="color:#74531F">ToString</span><span style="color:#000000">() + </span><span style="color:#A31515">"</span><span style="color:#B776FB">\"</span><span style="color:#A31515">"</span></div><div class="a t m " style="left:13.21px;top:78.69px;font-size:11.5px;line-height:11.5px;color:#2B91AF;letter-spacing:-0.471px;">682</div><div class="a code" style="left:72px;top:78.69px;"><span style="color:#000000">                + </span><span style="color:#A31515">", </span><span style="color:#B776FB">\"</span><span style="color:#A31515">records</span><span style="color:#B776FB">\"</span><span style="color:#A31515">:</span><span style="color:#B776FB">\"</span><span style="color:#A31515">"</span><span style="color:#000000"> + </span><span style="color:#1F377F">q_count</span><span style="color:#000000"> + </span><span style="color:#A31515">"</span><span style="color:#B776FB">\"</span><span style="color:#A31515">"</span></div><div class="a t m " style="left:13.21px;top:93.99px;font-size:11.5px;line-height:11.5px;color:#2B91AF;letter-spacing:-0.471px;">683</div><div class="a code" style="left:72px;top:93.99px;"><span style="color:#000000">                + </span><span style="color:#A31515">", </span><span style="color:#B776FB">\"</span><span style="color:#A31515">rows</span><span style="color:#B776FB">\"</span><span style="color:#A31515">:["</span><span style="color:#000000"> + </span><span style="color:#1F377F">st</span><span style="color:#000000"> + </span><span style="color:#A31515">"]"</span></div><div class="a t m " style="left:13.21px;top:109.29px;font-size:11.5px;line-height:11.5px;color:#2B91AF;letter-spacing:-0.471px;">684</div><div class="a code" style="left:72px;top:109.29px;"><span style="color:#000000">                + </span><span style="color:#A31515">", </span><span style="color:#B776FB">\"</span><span style="color:#A31515">user</span><span style="color:#B776FB">\"</span><span style="color:#A31515">:</span><span style="color:#B776FB">\"</span><span style="color:#A31515">"</span><span style="color:#000000"> + </span><span style="color:#1F377F">cUserDM</span><span style="color:#000000">?.</span><span style="color:#000000">user</span><span style="color:#000000">?.</span><span style="color:#000000">id</span><span style="color:#000000">.</span><span style="color:#74531F">ToString</span><span style="color:#000000">() + </span><span style="color:#A31515">"</span><span style="color:#B776FB">\"</span><span style="color:#A31515">"</span></div><div class="a t m " style="left:13.21px;top:124.59px;font-size:11.5px;line-height:11.5px;color:#2B91AF;letter-spacing:-0.471px;">685</div><div class="a code" style="left:72px;top:124.59px;"><span style="color:#000000">                + </span><span style="color:#A31515">", </span><span style="color:#B776FB">\"</span><span style="color:#A31515">page</span><span style="color:#B776FB">\"</span><span style="color:#A31515">:</span><span style="color:#B776FB">\"</span><span style="color:#A31515">"</span><span style="color:#000000"> + </span><span style="color:#1F377F">page</span><span style="color:#000000">?.</span><span style="color:#74531F">ToString</span><span style="color:#000000">() + </span><span style="color:#A31515">"</span><span style="color:#B776FB">\"</span><span style="color:#A31515">"</span></div><div class="a t m " style="left:13.21px;top:139.89px;font-size:11.5px;line-height:11.5px;color:#2B91AF;letter-spacing:-0.471px;">686</div><div class="a code" style="left:72px;top:139.89px;"><span style="color:#000000">                + </span><span style="color:#A31515">", </span><span style="color:#B776FB">\"</span><span style="color:#A31515">RawUrl</span><span style="color:#B776FB">\"</span><span style="color:#A31515">:</span><span style="color:#B776FB">\"</span><span style="color:#A31515">"</span><span style="color:#000000"> + </span><span style="color:#1F377F">query</span><span style="color:#000000"> + </span><span style="color:#A31515">"</span><span style="color:#B776FB">\"</span><span style="color:#A31515">"</span></div><div class="a t m " style="left:13.21px;top:155.19px;font-size:11.5px;line-height:11.5px;color:#2B91AF;letter-spacing:-0.471px;">687</div><div class="a code" style="left:72px;top:155.19px;"><span style="color:#000000">                + </span><span style="color:#A31515">", </span><span style="color:#B776FB">\"</span><span style="color:#A31515">UrlReferrer</span><span style="color:#B776FB">\"</span><span style="color:#A31515">:</span><span style="color:#B776FB">\"</span><span style="color:#A31515">"</span><span style="color:#000000"> + </span><span style="color:#1F377F">UrlRef</span><span style="color:#000000"> + </span><span style="color:#A31515">"</span><span style="color:#B776FB">\"</span><span style="color:#A31515">"</span></div><div class="a t m " style="left:13.21px;top:170.49px;font-size:11.5px;line-height:11.5px;color:#2B91AF;letter-spacing:-0.471px;">688</div><div class="a code" style="left:72px;top:170.49px;"><span style="color:#000000">                + </span><span style="color:#A31515">", </span><span style="color:#B776FB">\"</span><span style="color:#A31515">filter_type</span><span style="color:#B776FB">\"</span><span style="color:#A31515">:</span><span style="color:#B776FB">\"</span><span style="color:#A31515">"</span><span style="color:#000000"> + </span><span style="color:#1F377F">filter_type</span><span style="color:#000000"> + </span><span style="color:#A31515">"</span><span style="color:#B776FB">\"</span><span style="color:#A31515">"</span></div><div class="a t m " style="left:13.21px;top:185.79px;font-size:11.5px;line-height:11.5px;color:#2B91AF;letter-spacing:-0.471px;">689</div><div class="a code" style="left:72px;top:185.79px;"><span style="color:#000000">                + </span><span style="color:#A31515">", </span><span style="color:#B776FB">\"</span><span style="color:#A31515">user_filter</span><span style="color:#B776FB">\"</span><span style="color:#A31515">:</span><span style="color:#B776FB">\"</span><span style="color:#A31515">"</span><span style="color:#000000"> + </span><span style="color:#1F377F">strUserFilter</span><span style="color:#000000">.</span><span style="color:#74531F">Replace</span><span style="color:#000000">(</span><span style="color:#A31515">"</span><span style="color:#B776FB">\"</span><span style="color:#A31515">"</span><span style="color:#000000">, </span><span style="color:#A31515">"</span><span style="color:#B776FB">\\</span><span style="color:#B776FB">\"</span><span style="color:#A31515">"</span><span style="color:#000000">) + </span><span style="color:#A31515">"</span><span style="color:#B776FB">\"</span><span style="color:#A31515">"</span></div><div class="a t m " style="left:13.21px;top:201.09px;font-size:11.5px;line-height:11.5px;color:#2B91AF;letter-spacing:-0.471px;">690</div><div class="a" style="left:342.06px;top:198.89999999999998px;width:64.3px;height:15px;background:#A7CBEE;"></div><div class="a code" style="left:72px;top:201.09px;"><span style="color:#000000">                + </span><span style="color:#A31515">", </span><span style="color:#B776FB">\"</span><span style="color:#A31515">SqlRequest</span><span style="color:#B776FB">\"</span><span style="color:#A31515">:</span><span style="color:#B776FB">\"</span><span style="color:#A31515">"</span><span style="color:#000000"> + </span><span style="color:#1F377F">SqlRequest</span><span style="color:#000000"> + </span><span style="color:#A31515">"</span><span style="color:#B776FB">\"</span><span style="color:#A31515">"</span></div><div class="a t m " style="left:13.21px;top:216.39px;font-size:11.5px;line-height:11.5px;color:#2B91AF;letter-spacing:-0.471px;">691</div><div class="a code" style="left:72px;top:216.39px;"><span style="color:#000000">                + (</span><span style="color:#1F377F">cUserDM</span><span style="color:#000000">?.</span><span style="color:#000000">user</span><span style="color:#000000"> != </span><span style="color:#0000FF">null</span><span style="color:#000000"> &amp;&amp; </span><span style="color:#1F377F">filter_type</span><span style="color:#000000"> == </span><span style="color:#A31515">"init"</span><span style="color:#000000"> &amp;&amp; </span><span style="color:#1F377F">page</span><span style="color:#000000"> == </span><span style="color:#A31515">"1"</span><span style="color:#000000"> ? </span><span style="color:#A31515">", </span><span style="color:#B776FB">\"</span><span style="color:#A31515">filter</span><span style="color:#B776FB">\"</span><span style="color:#A31515">:</span><span style="color:#B776FB">\"</span><span style="color:#A31515">"</span><span style="color:#000000"> + </span><span style="color:#1F377F">strUserFilter</span><span style="color:#000000">.</span><span style="color:#74531F">Replace</span><span style="color:#000000">(</span><span style="color:#A31515">"</span><span style="color:#B776FB">\"</span><span style="color:#A31515">"</span><span style="color:#000000">, </span><span style="color:#A31515">"</span><span style="color:#B776FB">\\</span><span style="color:#B776FB">\"</span><span style="color:#A31515">"</span><span style="color:#000000">) + </span><span style="color:#A31515">"</span><span style="color:#B776FB">\"</span><span style="color:#A31515">"</span><span style="color:#000000"> : </span><span style="color:#A31515">""</span><span style="color:#000000">)</span></div><div class="a t m " style="left:13.21px;top:231.69px;font-size:11.5px;line-height:11.5px;color:#2B91AF;letter-spacing:-0.471px;">692</div><div class="a code" style="left:72px;top:231.69px;"><span style="color:#000000">                + </span><span style="color:#1F377F">exception</span><span style="color:#000000"> + </span><span style="color:#A31515">"}"</span><span style="color:#000000">;</span></div><div class="a t m " style="left:13.21px;top:246.99px;font-size:11.5px;line-height:11.5px;color:#2B91AF;letter-spacing:-0.471px;">693</div><div class="a code" style="left:72px;top:246.99px;"><span style="color:#000000">            </span><span style="color:#8F08C4">return</span><span style="color:#000000"> </span><span style="color:#1F377F">st</span><span style="color:#000000">;</span></div><div class="a t m " style="left:13.21px;top:262.29px;font-size:11.5px;line-height:11.5px;color:#2B91AF;letter-spacing:-0.471px;">694</div><div class="a code" style="left:72px;top:262.29px;"></div><div class="a t m " style="left:13.21px;top:277.59px;font-size:11.5px;line-height:11.5px;color:#2B91AF;letter-spacing:-0.471px;">695</div><div class="a code" style="left:72px;top:277.59px;"><span style="color:#000000">        }</span></div><div class="a t m " style="left:13.21px;top:292.89px;font-size:11.5px;line-height:11.5px;color:#2B91AF;letter-spacing:-0.471px;">696</div><div class="a code" style="left:72px;top:292.89px;"><span style="color:#000000">        </span><span style="color:#0000FF">public</span><span style="color:#000000"> </span><span style="color:#0000FF">static</span><span style="color:#000000"> </span><span style="color:#2B91AF">Tuple</span><span style="color:#000000">&lt;</span><span style="color:#0000FF">string</span><span style="color:#000000">, </span><span style="color:#0000FF">string</span><span style="color:#000000">, </span><span style="color:#0000FF">int</span><span style="color:#000000">, </span><span style="color:#0000FF">int</span><span style="color:#000000">, </span><span style="color:#0000FF">int</span><span style="color:#000000">&gt; </span><span style="color:#74531F">CreateFullSqlRequest</span><span style="color:#000000">(</span><span style="color:#2B91AF">UserDM</span><span style="color:#000000"> </span><span style="color:#1F377F">cUserDM</span><span style="color:#000000">, </span><span style="color:#2B91AF">NameValueCollection</span><span style="color:#000000"> </span><span style="color:#1F377F">nvc</span><span style="color:#000000">, </span><span style="color:#0000FF">string</span><span style="color:#000000"> </span><span style="color:#1F377F">type_filter</span><span style="color:#000000">, </span><span style="color:#0000FF">string</span><span style="color:#000000"> </span><span style="color:#1F377F">filter_type</span><span style="color:#000000">, </span><span style="color:#0000FF">string</span><span style="color:#000000"> </span><span style="color:#1F377F">rows</span><span style="color:#000000">, </span><span style="color:#0000FF">string</span><span style="color:#000000"> </span><span style="color:#1F377F">sidx</span><span style="color:#000000">, </span><span style="color:#0000FF">string</span><span style="color:#000000"> </span><span style="color:#1F377F">sord</span><span style="color:#000000">, </span><span style="color:#0000FF">string</span><span style="color:#000000"> </span><span style="color:#1F377F">action</span><span style="color:#000000">, </span><span style="color:#0000FF">string</span><span style="color:#000000"> </span><span style="color:#1F377F">list_mark</span><span style="color:#000000">, </span><span style="color:#0000FF">string</span><span style="color:#000000"> </span><span style="color:#1F377F">cLang</span><span style="color:#000000">, </span><span style="color:#0000FF">string</span><span style="color:#000000"> </span><span style="color:#1F377F">page</span><span style="color:#000000">, </span><span style="color:#0000FF">string</span><span style="color:#000000"> </span><span style="color:#1F377F">query</span><span style="color:#000000">)...</span></div><div class="a t m " style="left:13.21px;top:308.19px;font-size:11.5px;line-height:11.5px;color:#2B91AF;letter-spacing:-0.471px;">835</div><div class="a code" style="left:72px;top:308.19px;"><span style="color:#000000">        </span><span style="color:#0000FF">public</span><span style="color:#000000"> </span><span style="color:#0000FF">static</span><span style="color:#000000"> </span><span style="color:#0000FF">string</span><span style="color:#000000"> </span><span style="color:#74531F">GetFilterWhere</span><span style="color:#000000">(</span><span style="color:#2B91AF">NameValueCollection</span><span style="color:#000000"> </span><span style="color:#1F377F">nvc</span><span style="color:#000000">, </span><span style="color:#0000FF">string</span><span style="color:#000000">[][] </span><span style="color:#1F377F">arFieldReplace</span><span style="color:#000000">, </span><span style="color:#0000FF">string</span><span style="color:#000000"> </span><span style="color:#1F377F">only_prefix</span><span style="color:#000000"> = </span><span style="color:#A31515">""</span><span style="color:#000000">, </span><span style="color:#0000FF">string</span><span style="color:#000000"> </span><span style="color:#1F377F">exlcude_prefixes</span><span style="color:#000000"> = </span><span style="color:#A31515">""</span><span style="color:#000000">)</span></div><svg class="a" style="left:62px;top:294.70000000000005px;" width="9" height="9" viewBox="0 0 9 9"><rect x="0.5" y="0.5" width="8" height="8" fill="#E3E3E3" stroke="#A5A5A5"/><path d="M2 4.5 H7 M4.5 2 V7" stroke="#424242" stroke-width="1.2"/></svg><svg class="a" style="left:62px;top:310.0px;" width="9" height="9" viewBox="0 0 9 9"><rect x="0.5" y="0.5" width="8" height="8" fill="#E3E3E3" stroke="#A5A5A5"/><path d="M2 4.5 H7 M4.5 2 V7" stroke="#424242" stroke-width="1.2"/></svg><div class="a" style="left:66px;top:29.30000000000001px;width:4px;height:1px;background:#A5A5A5;"></div><div class="a" style="left:66px;top:289.4000000000001px;width:4px;height:1px;background:#A5A5A5;"></div><div class="a" style="left:66px;top:304.70000000000005px;width:4px;height:1px;background:#A5A5A5;"></div><svg class="a" style="left:34px;top:200px;" width="14" height="13" viewBox="0 0 14 13"><path d="M12.3 1.2 L7.5 6" stroke="#4A4A4A" stroke-width="1.7" stroke-linecap="round"/><path d="M7 4.8 L8.7 6.5 L3.2 12 C2.4 12.8 1.2 12.8 0.6 12.2 C0 11.6 0 10.4 0.8 9.6 Z" fill="#2F7BC4"/><path d="M2.6 8.3 L4.2 9.9 M3.9 7 L5.5 8.6 M5.2 5.9 L6.7 7.4" stroke="#A9CCEB" stroke-width="0.7"/></svg><div class="a" style="left:1037.5px;top:307.0px;width:21.29px;height:13px;box-sizing:border-box;border:1px solid #A5A5A5;"></div><div class="a t m " style="left:1038.5px;top:308.19px;font-size:11.5px;line-height:11.5px;color:#808080;letter-spacing:-0.471px;">...</div></div><div class="a" style="left:88px;top:691px;width:1415px;height:16px;background:#EEEEF2;"></div><svg class="a" style="left:1295px;top:694px;" width="6" height="10" viewBox="0 0 6 10"><path d="M0 0 L6 5 L0 10 Z" fill="#868999"/></svg><div class="a" style="left:105px;top:695px;width:800px;height:9px;background:#C2C3C9;"></div><svg class="a" style="left:93px;top:695px;" width="6" height="9" viewBox="0 0 6 9"><path d="M6 0 L0 4.5 L6 9 Z" fill="#868999"/></svg><div class="a t s " style="left:1328px;top:694.18px;font-size:11.6px;line-height:11.6px;color:#1E1E1E;">Ln: 690</div><div class="a t s " style="left:1381px;top:694.18px;font-size:11.6px;line-height:11.6px;color:#1E1E1E;">Ch: 43</div><div class="a t s " style="left:1430px;top:694.18px;font-size:11.6px;line-height:11.6px;color:#1E1E1E;">SPC</div><div class="a t s " style="left:1468px;top:694.18px;font-size:11.6px;line-height:11.6px;color:#1E1E1E;">CRLF</div><div class="a" style="left:88px;top:707px;width:1415px;height:2px;background:#8E93A6;"></div><div class="a" style="left:0;top:709px;width:1503px;height:248px;overflow:hidden;"><div class="a" style="left:92px;top:0px;width:1px;height:248px;background:repeating-linear-gradient(to bottom,#C8C8C8 0,#C8C8C8 3px,transparent 3px,transparent 5px);"></div><div class="a" style="left:118px;top:0px;width:1px;height:248px;background:repeating-linear-gradient(to bottom,#C8C8C8 0,#C8C8C8 3px,transparent 3px,transparent 5px);"></div><div class="a" style="left:144px;top:0px;width:1px;height:20px;background:repeating-linear-gradient(to bottom,#C8C8C8 0,#C8C8C8 3px,transparent 3px,transparent 5px);"></div><div class="a" style="left:84px;top:19px;width:4px;height:1px;background:#A5A5A5;"></div><div class="a" style="left:84px;top:34px;width:4px;height:1px;background:#A5A5A5;"></div><div class="a" style="left:84px;top:88px;width:4px;height:1px;background:#A5A5A5;"></div><div class="a" style="left:84px;top:0px;width:1px;height:248px;background:#A5A5A5;"></div><div class="a t m " style="left:35.21px;top:5.89px;font-size:11.5px;line-height:11.5px;color:#2B91AF;letter-spacing:-0.471px;">601</div><div class="a code" style="left:90px;top:5.89px;"></div><div class="a t m " style="left:35.21px;top:20.99px;font-size:11.5px;line-height:11.5px;color:#2B91AF;letter-spacing:-0.471px;">602</div><div class="a code" style="left:90px;top:20.99px;"><span style="color:#000000">        }</span></div><div class="a t m " style="left:35.21px;top:47.59px;font-size:11.5px;line-height:11.5px;color:#2B91AF;letter-spacing:-0.471px;">603</div><div class="a t s " style="left:141px;top:36.38px;font-size:9px;line-height:9px;color:#7F7F8A;">3 references</div><svg class="a" style="left:80px;top:49.39999999999998px;" width="9" height="9" viewBox="0 0 9 9"><rect x="0.5" y="0.5" width="8" height="8" fill="#E3E3E3" stroke="#A5A5A5"/><path d="M2 4.5 H7 M4.5 2 V7" stroke="#424242" stroke-width="1.2"/></svg><div class="a" style="left:276.47px;top:45.39999999999998px;width:64.3px;height:15px;background:#E4E6D6;"></div><div class="a code" style="left:90px;top:47.59px;"><span style="color:#000000">        </span><span style="color:#0000FF">public</span><span style="color:#000000"> </span><span style="color:#0000FF">static</span><span style="color:#000000"> </span><span style="color:#0000FF">string</span><span style="color:#000000"> </span><span style="color:#74531F">CreateJson</span><span style="color:#000000">(</span><span style="color:#2B91AF">UserDM</span><span style="color:#000000"> </span><span style="color:#1F377F">cUserDM</span><span style="color:#000000">, </span><span style="color:#0000FF">string</span><span style="color:#000000"> </span><span style="color:#1F377F">SqlRequest</span><span style="color:#000000">, </span><span style="color:#0000FF">string</span><span style="color:#000000"> </span><span style="color:#1F377F">query</span><span style="color:#000000">, </span><span style="color:#0000FF">string</span><span style="color:#000000"> </span><span style="color:#1F377F">UrlRef</span><span style="color:#000000">, </span><span style="color:#0000FF">string</span><span style="color:#000000"> </span><span style="color:#1F377F">page</span><span style="color:#000000">, </span><span style="color:#0000FF">string</span><span style="color:#000000"> </span><span style="color:#1F377F">filter_type</span><span style="color:#000000">, </span><span style="color:#0000FF">string</span><span style="color:#000000"> </span><span style="color:#1F377F">strUserFilter</span><span style="color:#000000">, </span><span style="color:#0000FF">int</span><span style="color:#000000"> </span><span style="color:#1F377F">top</span><span style="color:#000000">)</span></div><div class="a" style="left:1164.81px;top:46.39999999999998px;width:21.29px;height:13px;box-sizing:border-box;border:1px solid #A5A5A5;"></div><div class="a t m " style="left:1165.81px;top:47.59px;font-size:11.5px;line-height:11.5px;color:#808080;letter-spacing:-0.471px;">...</div><div class="a t m " style="left:35.21px;top:74.66px;font-size:11.5px;line-height:11.5px;color:#2B91AF;letter-spacing:-0.471px;">696</div><div class="a t s " style="left:141px;top:63.45px;font-size:9px;line-height:9px;color:#7F7F8A;">3 references</div><svg class="a" style="left:80px;top:76.47000000000003px;" width="9" height="9" viewBox="0 0 9 9"><rect x="0.5" y="0.5" width="8" height="8" fill="#E3E3E3" stroke="#A5A5A5"/><path d="M2 4.5 H7 M4.5 2 V7" stroke="#424242" stroke-width="1.2"/></svg><div class="a code" style="left:90px;top:74.66px;"><span style="color:#000000">        </span><span style="color:#0000FF">public</span><span style="color:#000000"> </span><span style="color:#0000FF">static</span><span style="color:#000000"> </span><span style="color:#2B91AF">Tuple</span><span style="color:#000000">&lt;</span><span style="color:#0000FF">string</span><span style="color:#000000">, </span><span style="color:#0000FF">string</span><span style="color:#000000">, </span><span style="color:#0000FF">int</span><span style="color:#000000">, </span><span style="color:#0000FF">int</span><span style="color:#000000">, </span><span style="color:#0000FF">int</span><span style="color:#000000">&gt; </span><span style="color:#74531F">CreateFullSqlRequest</span><span style="color:#000000">(</span><span style="color:#2B91AF">UserDM</span><span style="color:#000000"> </span><span style="color:#1F377F">cUserDM</span><span style="color:#000000">, </span><span style="color:#2B91AF">NameValueCollection</span><span style="color:#000000"> </span><span style="color:#1F377F">nvc</span><span style="color:#000000">, </span><span style="color:#0000FF">string</span><span style="color:#000000"> </span><span style="color:#1F377F">type_filter</span><span style="color:#000000">, </span><span style="color:#0000FF">string</span><span style="color:#000000"> </span><span style="color:#1F377F">filter_type</span><span style="color:#000000">, </span><span style="color:#0000FF">string</span><span style="color:#000000"> </span><span style="color:#1F377F">rows</span><span style="color:#000000">, </span><span style="color:#0000FF">string</span><span style="color:#000000"> </span><span style="color:#1F377F">sidx</span><span style="color:#000000">, </span><span style="color:#0000FF">string</span><span style="color:#000000"> </span><span style="color:#1F377F">sord</span><span style="color:#000000">, </span><span style="color:#0000FF">string</span><span style="color:#000000"> </span><span style="color:#1F377F">action</span><span style="color:#000000">, </span><span style="color:#0000FF">string</span><span style="color:#000000"> </span><span style="color:#1F377F">list_mark</span><span style="color:#000000">, </span><span style="color:#0000FF">string</span><span style="color:#000000"> </span><span style="color:#1F377F">cLang</span><span style="color:#000000">, </span><span style="color:#0000FF">string</span><span style="color:#000000"> </span><span style="color:#1F377F">page</span><span style="color:#000000">, </span><span style="color:#0000FF">string</span><span style="color:#000000"> </span><span style="color:#1F377F">query</span><span style="color:#000000">)</span></div><div class="a t m " style="left:35.21px;top:101.73px;font-size:11.5px;line-height:11.5px;color:#2B91AF;letter-spacing:-0.471px;">835</div><div class="a t s " style="left:141px;top:90.52px;font-size:9px;line-height:9px;color:#7F7F8A;">13 references</div><svg class="a" style="left:80px;top:103.53999999999996px;" width="9" height="9" viewBox="0 0 9 9"><rect x="0.5" y="0.5" width="8" height="8" fill="#E3E3E3" stroke="#A5A5A5"/><path d="M2 4.5 H7 M4.5 2 V7" stroke="#424242" stroke-width="1.2"/></svg><div class="a code" style="left:90px;top:101.73px;"><span style="color:#000000">        </span><span style="color:#0000FF">public</span><span style="color:#000000"> </span><span style="color:#0000FF">static</span><span style="color:#000000"> </span><span style="color:#0000FF">string</span><span style="color:#000000"> </span><span style="color:#74531F">GetFilterWhere</span><span style="color:#000000">(</span><span style="color:#2B91AF">NameValueCollection</span><span style="color:#000000"> </span><span style="color:#1F377F">nvc</span><span style="color:#000000">, </span><span style="color:#0000FF">string</span><span style="color:#000000">[][] </span><span style="color:#1F377F">arFieldReplace</span><span style="color:#000000">, </span><span style="color:#0000FF">string</span><span style="color:#000000"> </span><span style="color:#1F377F">only_prefix</span><span style="color:#000000"> = </span><span style="color:#A31515">""</span><span style="color:#000000">, </span><span style="color:#0000FF">string</span><span style="color:#000000"> </span><span style="color:#1F377F">exlcude_prefixes</span><span style="color:#000000"> = </span><span style="color:#A31515">""</span><span style="color:#000000">)</span></div><div class="a" style="left:1055.5px;top:100.53999999999996px;width:21.29px;height:13px;box-sizing:border-box;border:1px solid #A5A5A5;"></div><div class="a t m " style="left:1056.5px;top:101.73px;font-size:11.5px;line-height:11.5px;color:#808080;letter-spacing:-0.471px;">...</div><div class="a t m " style="left:28.78px;top:128.80px;font-size:11.5px;line-height:11.5px;color:#2B91AF;letter-spacing:-0.471px;">1017</div><div class="a t s " style="left:141px;top:117.59px;font-size:9px;line-height:9px;color:#7F7F8A;">1 reference</div><svg class="a" style="left:80px;top:130.61px;" width="9" height="9" viewBox="0 0 9 9"><rect x="0.5" y="0.5" width="8" height="8" fill="#E3E3E3" stroke="#A5A5A5"/><path d="M2 4.5 H7 M4.5 2 V7" stroke="#424242" stroke-width="1.2"/></svg><div class="a code" style="left:90px;top:128.80px;"><span style="color:#000000">        </span><span style="color:#0000FF">private</span><span style="color:#000000"> </span><span style="color:#0000FF">string</span><span style="color:#000000"> </span><span style="color:#74531F">GetMembers</span><span style="color:#000000">(</span><span style="color:#2B91AF">HttpContext</span><span style="color:#000000"> </span><span style="color:#1F377F">context</span><span style="color:#000000">, </span><span style="color:#2B91AF">UserDM</span><span style="color:#000000"> </span><span style="color:#1F377F">cUserDM</span><span style="color:#000000">)</span></div><div class="a" style="left:541.0999999999999px;top:127.61000000000001px;width:21.29px;height:13px;box-sizing:border-box;border:1px solid #A5A5A5;"></div><div class="a t m " style="left:542.0999999999999px;top:128.80px;font-size:11.5px;line-height:11.5px;color:#808080;letter-spacing:-0.471px;">...</div><div class="a t m " style="left:28.78px;top:155.87px;font-size:11.5px;line-height:11.5px;color:#2B91AF;letter-spacing:-0.471px;">1075</div><div class="a t s " style="left:141px;top:144.66px;font-size:9px;line-height:9px;color:#7F7F8A;">0 references</div><svg class="a" style="left:80px;top:157.67999999999995px;" width="9" height="9" viewBox="0 0 9 9"><rect x="0.5" y="0.5" width="8" height="8" fill="#E3E3E3" stroke="#A5A5A5"/><path d="M2 4.5 H7 M4.5 2 V7" stroke="#424242" stroke-width="1.2"/></svg><div class="a" style="left:283.4px;top:166.67999999999995px;width:1px;height:1px;background:#8A8A8A;"></div><div class="a" style="left:285.59999999999997px;top:166.67999999999995px;width:1px;height:1px;background:#8A8A8A;"></div><div class="a" style="left:287.79999999999995px;top:166.67999999999995px;width:1px;height:1px;background:#8A8A8A;"></div><div class="a" style="left:290.0px;top:166.67999999999995px;width:1px;height:1px;background:#8A8A8A;"></div><div class="a code" style="left:90px;top:155.87px;"><span style="color:#000000">        </span><span style="color:#0000FF">private</span><span style="color:#000000"> </span><span style="color:#0000FF">static</span><span style="color:#000000"> </span><span style="color:#0000FF">string</span><span style="color:#000000"> </span><span style="color:#9A9AA6">GetWhereFilter</span><span style="color:#000000">(</span><span style="color:#0000FF">string</span><span style="color:#000000"> </span><span style="color:#1F377F">filters</span><span style="color:#000000">, </span><span style="color:#0000FF">string</span><span style="color:#000000">[][] </span><span style="color:#1F377F">_arFieldReplace</span><span style="color:#000000">)</span></div><div class="a" style="left:656.8399999999999px;top:154.67999999999995px;width:21.29px;height:13px;box-sizing:border-box;border:1px solid #A5A5A5;"></div><div class="a t m " style="left:657.8399999999999px;top:155.87px;font-size:11.5px;line-height:11.5px;color:#808080;letter-spacing:-0.471px;">...</div><div class="a t m " style="left:28.78px;top:182.94px;font-size:11.5px;line-height:11.5px;color:#2B91AF;letter-spacing:-0.471px;">1092</div><div class="a t s " style="left:141px;top:171.73px;font-size:9px;line-height:9px;color:#7F7F8A;">1 reference</div><svg class="a" style="left:80px;top:184.75px;" width="9" height="9" viewBox="0 0 9 9"><rect x="0.5" y="0.5" width="8" height="8" fill="#E3E3E3" stroke="#A5A5A5"/><path d="M2 4.5 H7 M4.5 2 V7" stroke="#424242" stroke-width="1.2"/></svg><div class="a code" style="left:90px;top:182.94px;"><span style="color:#000000">        </span><span style="color:#0000FF">private</span><span style="color:#000000"> </span><span style="color:#0000FF">string</span><span style="color:#000000"> </span><span style="color:#74531F">GetDocuments</span><span style="color:#000000">(</span><span style="color:#2B91AF">HttpContext</span><span style="color:#000000"> </span><span style="color:#1F377F">context</span><span style="color:#000000">, </span><span style="color:#2B91AF">UserDM</span><span style="color:#000000"> </span><span style="color:#1F377F">cUserDM</span><span style="color:#000000">)</span></div><div class="a" style="left:553.96px;top:181.75px;width:21.29px;height:13px;box-sizing:border-box;border:1px solid #A5A5A5;"></div><div class="a t m " style="left:554.96px;top:182.94px;font-size:11.5px;line-height:11.5px;color:#808080;letter-spacing:-0.471px;">...</div><div class="a t m " style="left:28.78px;top:210.01px;font-size:11.5px;line-height:11.5px;color:#2B91AF;letter-spacing:-0.471px;">1154</div><div class="a t s " style="left:141px;top:198.80px;font-size:9px;line-height:9px;color:#7F7F8A;">1 reference</div><svg class="a" style="left:80px;top:211.81999999999994px;" width="9" height="9" viewBox="0 0 9 9"><rect x="0.5" y="0.5" width="8" height="8" fill="#E3E3E3" stroke="#A5A5A5"/><path d="M2 4.5 H7 M4.5 2 V7" stroke="#424242" stroke-width="1.2"/></svg><div class="a code" style="left:90px;top:210.01px;"><span style="color:#000000">        </span><span style="color:#0000FF">private</span><span style="color:#000000"> </span><span style="color:#0000FF">string</span><span style="color:#000000"> </span><span style="color:#74531F">GetBinotelAndMobNumber</span><span style="color:#000000">(</span><span style="color:#2B91AF">HttpContext</span><span style="color:#000000"> </span><span style="color:#1F377F">context</span><span style="color:#000000">, </span><span style="color:#2B91AF">UserDM</span><span style="color:#000000"> </span><span style="color:#1F377F">cUserDM</span><span style="color:#000000">)</span></div><div class="a" style="left:618.26px;top:208.81999999999994px;width:21.29px;height:13px;box-sizing:border-box;border:1px solid #A5A5A5;"></div><div class="a t m " style="left:619.26px;top:210.01px;font-size:11.5px;line-height:11.5px;color:#808080;letter-spacing:-0.471px;">...</div><div class="a t m " style="left:28.78px;top:237.08px;font-size:11.5px;line-height:11.5px;color:#2B91AF;letter-spacing:-0.471px;">1188</div><div class="a t s " style="left:141px;top:225.87px;font-size:9px;line-height:9px;color:#7F7F8A;">1 reference</div><svg class="a" style="left:80px;top:238.89px;" width="9" height="9" viewBox="0 0 9 9"><rect x="0.5" y="0.5" width="8" height="8" fill="#E3E3E3" stroke="#A5A5A5"/><path d="M2 4.5 H7 M4.5 2 V7" stroke="#424242" stroke-width="1.2"/></svg><div class="a code" style="left:90px;top:237.08px;"><span style="color:#000000">        </span><span style="color:#0000FF">private</span><span style="color:#000000"> </span><span style="color:#0000FF">string</span><span style="color:#000000"> </span><span style="color:#74531F">SetBinotelAndMobNumber</span><span style="color:#000000">(</span><span style="color:#2B91AF">HttpContext</span><span style="color:#000000"> </span><span style="color:#1F377F">context</span><span style="color:#000000">, </span><span style="color:#2B91AF">UserDM</span><span style="color:#000000"> </span><span style="color:#1F377F">cUserDM</span><span style="color:#000000">)</span></div><div class="a" style="left:618.26px;top:235.89px;width:21.29px;height:13px;box-sizing:border-box;border:1px solid #A5A5A5;"></div><div class="a t m " style="left:619.26px;top:237.08px;font-size:11.5px;line-height:11.5px;color:#808080;letter-spacing:-0.471px;">...</div></div><div class="a" style="left:1504px;top:140px;width:18px;height:817px;background:#E8E8EC;"></div><svg class="a" style="left:1507px;top:145px;" width="10" height="6" viewBox="0 0 10 6"><path d="M0 6 L5 0 L10 6 Z" fill="#868999"/></svg><svg class="a" style="left:1507px;top:943px;" width="10" height="6" viewBox="0 0 10 6"><path d="M0 0 L5 6 L10 0 Z" fill="#868999"/></svg><div class="a" style="left:1507px;top:669px;width:10px;height:77px;background:#C2C3C9;"></div><div class="a" style="left:1516px;top:555px;width:5px;height:7px;background:#1E8C1E;"></div><div class="a" style="left:1516px;top:565px;width:5px;height:8px;background:#A9A9AF;"></div><div class="a" style="left:1516px;top:634px;width:5px;height:6px;background:#A9A9AF;"></div><div class="a" style="left:1516px;top:642px;width:5px;height:10px;background:#1E8C1E;"></div><div class="a" style="left:1516px;top:666px;width:5px;height:7px;background:#A9A9AF;"></div><div class="a" style="left:1516px;top:695px;width:5px;height:10px;background:#A9A9AF;"></div><div class="a" style="left:1516px;top:722px;width:5px;height:5px;background:#A9A9AF;"></div><div class="a" style="left:1516px;top:733px;width:5px;height:19px;background:#A9A9AF;"></div><div class="a" style="left:1503px;top:710px;width:19px;height:2px;background:#0000CD;"></div><div class="a" style="left:1510px;top:709px;width:5px;height:6px;background:#3294F7;"></div><div class="a" style="left:7px;top:957px;width:1515px;height:17px;background:#EEEEF2;"></div><div class="a" style="left:7px;top:957px;width:59px;height:17px;background:#F5F7FE;"></div><div class="a t s " style="left:10px;top:959.84px;font-size:12px;line-height:12px;color:#1E1E1E;">90 %</div><svg class="a" style="left:56px;top:964px;" width="7" height="4" viewBox="0 0 7 4"><path d="M0 0 H7 L3.5 4 Z" fill="#1E1E1E"/></svg><svg class="a" style="left:95px;top:961px;" width="10" height="10" viewBox="0 0 10 10"><circle cx="5" cy="5" r="5" fill="#E51400"/><path d="M3 3 L7 7 M7 3 L3 7" stroke="#fff" stroke-width="1.5"/></svg><div class="a t s " style="left:109px;top:959.84px;font-size:12px;line-height:12px;color:#1E1E1E;">0</div><svg class="a" style="left:141px;top:961px;" width="10" height="9" viewBox="0 0 10 9"><path d="M5 0 L10 9 H0 Z" fill="#FFCC00"/><path d="M5 3 V6 M5 7 V8" stroke="#1E1E1E" stroke-width="1.2"/></svg><div class="a t s " style="left:155px;top:959.84px;font-size:12px;line-height:12px;color:#1E1E1E;">3</div><svg class="a" style="left:193px;top:961px;" width="13" height="10" viewBox="0 0 13 10"><path d="M12.5 5 H1.5 M5.5 1 L1.5 5 L5.5 9" fill="none" stroke="#00539C" stroke-width="1.6"/></svg><svg class="a" style="left:221px;top:961px;" width="13" height="10" viewBox="0 0 13 10"><path d="M0.5 5 H11.5 M7.5 1 L11.5 5 L7.5 9" fill="none" stroke="#00539C" stroke-width="1.6"/></svg><div class="a" style="left:248px;top:959px;width:1px;height:13px;background:#BFC4D4;"></div><svg class="a" style="left:264px;top:959px;" width="13" height="13" viewBox="0 0 13 13"><path d="M7.5 4.5 L11.5 0.5" stroke="#424242" stroke-width="1.3"/><path d="M4 4.5 L6.5 3 L9.5 6 L8 8.5 Z" fill="#424242"/><path d="M4 4.5 L1 7.5 L5.5 12 L8 8.5" fill="none" stroke="#424242" stroke-width="1.1"/></svg><svg class="a" style="left:281px;top:964px;" width="7" height="4" viewBox="0 0 7 4"><path d="M0 0 H7 L3.5 4 Z" fill="#1E1E1E"/></svg><svg class="a" style="left:318px;top:961px;" width="6" height="10" viewBox="0 0 6 10"><path d="M6 0 L0 5 L6 10 Z" fill="#868999"/></svg><div class="a" style="left:329px;top:961px;width:702px;height:9px;background:#C2C3C9;"></div><svg class="a" style="left:1309px;top:961px;" width="6" height="10" viewBox="0 0 6 10"><path d="M0 0 L6 5 L0 10 Z" fill="#868999"/></svg><div class="a t s " style="left:1343px;top:960.18px;font-size:11.6px;line-height:11.6px;color:#1E1E1E;">Ln: 600</div><div class="a t s " style="left:1397px;top:960.18px;font-size:11.6px;line-height:11.6px;color:#1E1E1E;">Ch: 27</div><div class="a t s " style="left:1448px;top:960.18px;font-size:11.6px;line-height:11.6px;color:#1E1E1E;">SPC</div><div class="a t s " style="left:1487px;top:960.18px;font-size:11.6px;line-height:11.6px;color:#1E1E1E;">CRLF</div><div class="a" style="left:1530px;top:98px;width:383px;height:21px;background:#3F5189;"></div><div class="a t s " style="left:1535px;top:102.97px;font-size:11.85px;line-height:11.85px;color:#FFFFFF;">Solution Explorer</div><svg class="a" style="left:1865px;top:107px;" width="9" height="5" viewBox="0 0 9 5"><path d="M0 0 H9 L4.5 5 Z" fill="#CED4EE"/></svg><svg class="a" style="left:1882px;top:104px;" width="8" height="11" viewBox="0 0 8 11"><path d="M1.5 0.5 H6.5 M2.5 0.5 V6 M5.5 0.5 V6 M0.5 6.5 H7.5 M4 6.5 V11" fill="none" stroke="#CED4EE" stroke-width="1.1"/></svg><svg class="a" style="left:1897px;top:104px;" width="10" height="10" viewBox="0 0 10 10"><path d="M0.5 0.5 L9.5 9.5 M9.5 0.5 L0.5 9.5" stroke="#CED4EE" stroke-width="1.2"/></svg><div class="a" style="left:1530px;top:119px;width:383px;height:28px;background:#CCD5F0;"></div><svg class="a" style="left:1539px;top:127px;" width="12" height="12" viewBox="0 0 12 12"><circle cx="6" cy="6" r="6" fill="#A8AFC6"/><path d="M9.5 6 H3.5 M6 3.2 L3.2 6 L6 8.8" fill="none" stroke="#D8DCEA" stroke-width="1.6"/></svg><svg class="a" style="left:1561px;top:127px;" width="12" height="12" viewBox="0 0 12 12"><circle cx="6" cy="6" r="6" fill="#A8AFC6"/><path d="M2.5 6 H8.5 M6 3.2 L8.8 6 L6 8.8" fill="none" stroke="#D8DCEA" stroke-width="1.6"/></svg><svg class="a" style="left:1582px;top:126px;" width="14" height="14" viewBox="0 0 14 14"><path d="M1 7 L7 1 L13 7 M2.5 5.5 V13 H11.5 V5.5" fill="none" stroke="#424242" stroke-width="1.2"/><rect x="6" y="9" width="2.5" height="4" fill="#424242"/><path d="M10.5 1 V4" stroke="#424242"/></svg><svg class="a" style="left:1603px;top:126px;" width="15" height="15" viewBox="0 0 15 15"><rect x="5.5" y="0.5" width="9" height="12" fill="#F5F6FA" stroke="#424242"/><rect x="5" y="0" width="10" height="2.5" fill="#424242"/><path d="M8 5.5 H13 M8 7.5 H13 M8 9.5 H13" stroke="#424242"/><path d="M6.5 6.5 L8.5 7.5 V13.5 L6.5 14.5 L3 11 L1.5 12.5 L0.5 12 V8.5 L1.5 8 L3 9.5 Z" fill="#8661C5"/></svg><div class="a" style="left:1625px;top:123px;width:1px;height:20px;background:#A0ABD0;"></div><svg class="a" style="left:1636px;top:125px;" width="15" height="15" viewBox="0 0 15 15"><path d="M1 1.5 H4 M2.5 1.5 V4" stroke="#424242" stroke-width="1.1"/><circle cx="8.5" cy="8.5" r="5" fill="#CCD5F0" stroke="#424242" stroke-width="1.1"/><path d="M8.5 5.5 V8.5 H11" fill="none" stroke="#424242" stroke-width="1.1"/></svg><svg class="a" style="left:1656px;top:132px;" width="7" height="4" viewBox="0 0 7 4"><path d="M0 0 H7 L3.5 4 Z" fill="#1E1E1E"/></svg><svg class="a" style="left:1668px;top:126px;" width="14" height="14" viewBox="0 0 14 14"><path d="M1.5 6 C2 2.5 5 1 8 1.5 C10 2 11 3 12 4" fill="none" stroke="#00539C" stroke-width="2"/><path d="M13 0.5 V5.5 H8" fill="#00539C"/><path d="M12.5 8 C12 11.5 9 13 6 12.5 C4 12 3 11 2 10" fill="none" stroke="#00539C" stroke-width="2"/><path d="M1 13.5 V8.5 H6 Z" fill="#00539C"/><path d="M13 0.5 V5.5 H8 Z" fill="#00539C"/></svg><svg class="a" style="left:1691px;top:126px;" width="13" height="14" viewBox="0 0 13 14"><path d="M11 8 A5 5 0 1 1 7 3" fill="none" stroke="#A8AFC6" stroke-width="1.8"/><path d="M6.5 0 L10 3 L6.5 6 Z" fill="#A8AFC6"/></svg><svg class="a" style="left:1713px;top:126px;" width="14" height="13" viewBox="0 0 14 13"><rect x="0.5" y="5.5" width="8" height="7" fill="none" stroke="#424242"/><path d="M3 5 V3 H11 V10 H9 M5.5 3 V0.5 H13.5 V8 H11" fill="none" stroke="#424242"/><path d="M2.5 9 H6.5" stroke="#00539C"/></svg><div class="a" style="left:1731px;top:121px;width:22px;height:24px;background:#FFEFC8;box-sizing:border-box;border:1px solid #8C6A10;"></div><svg class="a" style="left:1735px;top:125px;" width="14" height="15" viewBox="0 0 14 15"><path d="M0.5 8 V0.5 H6" fill="none" stroke="#424242"/><rect x="3.5" y="3.5" width="8" height="10" fill="#C8F0C0" stroke="#424242"/><path d="M6 7 H10 M6 9 H10 M6 11 H10" stroke="#424242"/><path d="M12 4 L13.5 5 V12" fill="none" stroke="#424242"/></svg><div class="a" style="left:1756px;top:123px;width:1px;height:20px;background:#A0ABD0;"></div><svg class="a" style="left:1766px;top:128px;" width="12" height="9" viewBox="0 0 12 9"><path d="M4 0.5 L0.8 4.5 L4 8.5 M8 0.5 L11.2 4.5 L8 8.5" fill="none" stroke="#424242" stroke-width="1.4"/></svg><svg class="a" style="left:1787px;top:126px;" width="14" height="14" viewBox="0 0 14 14"><path d="M2 12.5 L8 6.5" stroke="#424242" stroke-width="2.6" stroke-linecap="round"/><path d="M6.5 6 A4 4 0 0 1 12 1 L9.5 3.5 L10.5 4.5 L13 2 A4 4 0 0 1 8 7.5 Z" fill="#424242"/></svg><div class="a" style="left:1805px;top:121px;width:22px;height:24px;background:#FFEFC8;box-sizing:border-box;border:1px solid #8C6A10;"></div><div class="a" style="left:1809px;top:134px;width:6px;height:1px;background:#424242;"></div><div class="a" style="left:1814px;top:131px;width:8px;height:4px;background:#424242;"></div><div class="a" style="left:1530px;top:147px;width:383px;height:20px;background:#FCFCFD;"></div><div class="a t s " style="left:1535px;top:151.84px;font-size:12px;line-height:12px;color:#6D6D6D;">Search Solution Explorer (Ctrl+;)</div><svg class="a" style="left:1885px;top:151px;" width="13" height="13" viewBox="0 0 13 13"><circle cx="8" cy="5" r="4" fill="none" stroke="#424242" stroke-width="1.5"/><path d="M5.2 7.8 L1 12" stroke="#424242" stroke-width="2.2"/></svg><svg class="a" style="left:1903px;top:157px;" width="6" height="3" viewBox="0 0 6 3"><path d="M0 0 H6 L3 3 Z" fill="#424242"/></svg><div class="a" style="left:1530px;top:167px;width:383px;height:3px;background:#CCD5F0;"></div><div class="a" style="left:1530px;top:170px;width:383px;height:688px;background:#F7F8FD;"></div><div class="a" style="left:1895px;top:170px;width:18px;height:688px;background:#E8E8EC;"></div><svg class="a" style="left:1899px;top:176px;" width="10" height="6" viewBox="0 0 10 6"><path d="M0 6 L5 0 L10 6 Z" fill="#868999"/></svg><svg class="a" style="left:1899px;top:846px;" width="10" height="6" viewBox="0 0 10 6"><path d="M0 0 L5 6 L10 0 Z" fill="#868999"/></svg><div class="a" style="left:1900px;top:259px;width:8px;height:68px;background:#C2C3C9;"></div><div class="a" style="left:1530px;top:170px;width:365px;height:688px;overflow:hidden;"><div class="a" style="left:0px;top:306px;width:365px;height:18px;background:#E3E5F0;"></div><svg class="a" style="left:65px;top:4px;" width="6" height="10" viewBox="0 0 6 10"><path d="M0.5 0.5 L5.5 5 L0.5 9.5 Z" fill="none" stroke="#1E1E1E"/></svg><svg class="a" style="left:78px;top:6px;" width="6" height="8" viewBox="0 0 6 8"><path d="M1 3.5 V2.5 A1.9 1.9 0 0 1 4.8 2.2" fill="none" stroke="#1BA1E2" stroke-width="0.9"/><rect x="0.3" y="3.8" width="5" height="4.2" fill="#1BA1E2"/><rect x="2.3" y="5.3" width="1" height="1.6" fill="#fff"/></svg><svg class="a" style="left:87px;top:2px;" width="14" height="16" viewBox="0 0 14 16"><rect x="3" y="3" width="9" height="10.5" fill="#EEEEF8"/><path d="M2.5 8 V13.5 H12.5 V4.5 L10 2 H8" fill="none" stroke="#1E1E1E" stroke-width="1.1"/><path d="M10 2 L12.5 4.5 H10 Z" fill="#1E1E1E"/><path d="M0 4.5 H4.5" stroke="#00539C" stroke-width="2"/><path d="M3.5 1 L7.5 4.5 L3.5 8 Z" fill="#00539C"/></svg><div class="a t s" style="left:107px;top:4.14px;font-size:12px;line-height:12px;color:#1E1E1E;">TenderRecordAsp.ascx.cs</div><svg class="a" style="left:65px;top:22px;" width="6" height="10" viewBox="0 0 6 10"><path d="M0.5 0.5 L5.5 5 L0.5 9.5 Z" fill="none" stroke="#1E1E1E"/></svg><svg class="a" style="left:78px;top:24px;" width="6" height="8" viewBox="0 0 6 8"><path d="M1 3.5 V2.5 A1.9 1.9 0 0 1 4.8 2.2" fill="none" stroke="#1BA1E2" stroke-width="0.9"/><rect x="0.3" y="3.8" width="5" height="4.2" fill="#1BA1E2"/><rect x="2.3" y="5.3" width="1" height="1.6" fill="#fff"/></svg><svg class="a" style="left:87px;top:20px;" width="14" height="16" viewBox="0 0 14 16"><rect x="3" y="3" width="9" height="10.5" fill="#EEEEF8"/><path d="M2.5 8 V13.5 H12.5 V4.5 L10 2 H8" fill="none" stroke="#1E1E1E" stroke-width="1.1"/><path d="M10 2 L12.5 4.5 H10 Z" fill="#1E1E1E"/><path d="M0 4.5 H4.5" stroke="#00539C" stroke-width="2"/><path d="M3.5 1 L7.5 4.5 L3.5 8 Z" fill="#00539C"/></svg><div class="a t s" style="left:107px;top:22.14px;font-size:12px;line-height:12px;color:#1E1E1E;">TenderRecordAsp.ascx.designer.cs</div><svg class="a" style="left:29px;top:40px;" width="6" height="10" viewBox="0 0 6 10"><path d="M0.5 0.5 L5.5 5 L0.5 9.5 Z" fill="none" stroke="#1E1E1E"/></svg><svg class="a" style="left:51px;top:40px;" width="14" height="12" viewBox="0 0 14 12"><path d="M0 0.5 H5 L6.5 2 H13.5 V11.5 H0 Z" fill="#DCB067"/><path d="M1 2.5 H5.5" stroke="#F3E2C0" stroke-width="0.8"/></svg><div class="a t s" style="left:71px;top:40.14px;font-size:12px;line-height:12px;color:#1E1E1E;">css</div><svg class="a" style="left:29px;top:58px;" width="6" height="10" viewBox="0 0 6 10"><path d="M0.5 0.5 L5.5 5 L0.5 9.5 Z" fill="none" stroke="#1E1E1E"/></svg><svg class="a" style="left:51px;top:58px;" width="14" height="12" viewBox="0 0 14 12"><path d="M0 0.5 H5 L6.5 2 H13.5 V11.5 H0 Z" fill="#DCB067"/><path d="M1 2.5 H5.5" stroke="#F3E2C0" stroke-width="0.8"/></svg><div class="a t s" style="left:71px;top:58.14px;font-size:12px;line-height:12px;color:#1E1E1E;">fonts</div><svg class="a" style="left:32px;top:78px;" width="7" height="7" viewBox="0 0 7 7"><path d="M7 0 V7 H0 Z" fill="#1E1E1E"/></svg><svg class="a" style="left:51px;top:76px;" width="15" height="12" viewBox="0 0 15 12"><path d="M0.5 11 V1 H5 L6.5 2.5 H12.5 V5" fill="#F7F8FD" stroke="#DCB067" stroke-width="1.1"/><path d="M3 5 H14.5 L12.5 11.5 H0.5 Z" fill="#DCB067"/></svg><div class="a t s" style="left:71px;top:76.14px;font-size:12px;line-height:12px;color:#1E1E1E;">filters</div><svg class="a" style="left:60px;top:96px;" width="6" height="8" viewBox="0 0 6 8"><path d="M1 3.5 V2.5 A1.9 1.9 0 0 1 4.8 2.2" fill="none" stroke="#1BA1E2" stroke-width="0.9"/><rect x="0.3" y="3.8" width="5" height="4.2" fill="#1BA1E2"/><rect x="2.3" y="5.3" width="1" height="1.6" fill="#fff"/></svg><svg class="a" style="left:69px;top:92px;" width="15" height="16" viewBox="0 0 15 16"><rect x="5" y="2" width="8" height="10" fill="#EEEEF8"/><path d="M4.5 10 V1.5 H10 L13.5 5 V12.5 H10" fill="none" stroke="#1E1E1E" stroke-width="1.1"/><path d="M10 1.5 L13.5 5 H10 Z" fill="#1E1E1E"/><path d="M2.3 11 L0.6 13 L2.3 15 M7.7 11 L9.4 13 L7.7 15" fill="none" stroke="#1E1E1E" stroke-width="0.9"/><circle cx="5" cy="13" r="2" fill="#0E8FE0"/></svg><div class="a t s" style="left:89px;top:94.14px;font-size:12px;line-height:12px;color:#1E1E1E;">AuctionDate.htm</div><svg class="a" style="left:60px;top:114px;" width="6" height="8" viewBox="0 0 6 8"><path d="M1 3.5 V2.5 A1.9 1.9 0 0 1 4.8 2.2" fill="none" stroke="#1BA1E2" stroke-width="0.9"/><rect x="0.3" y="3.8" width="5" height="4.2" fill="#1BA1E2"/><rect x="2.3" y="5.3" width="1" height="1.6" fill="#fff"/></svg><svg class="a" style="left:69px;top:110px;" width="15" height="16" viewBox="0 0 15 16"><rect x="5" y="2" width="8" height="10" fill="#EEEEF8"/><path d="M4.5 10 V1.5 H10 L13.5 5 V12.5 H10" fill="none" stroke="#1E1E1E" stroke-width="1.1"/><path d="M10 1.5 L13.5 5 H10 Z" fill="#1E1E1E"/><path d="M2.3 11 L0.6 13 L2.3 15 M7.7 11 L9.4 13 L7.7 15" fill="none" stroke="#1E1E1E" stroke-width="0.9"/><circle cx="5" cy="13" r="2" fill="#0E8FE0"/></svg><div class="a t s" style="left:89px;top:112.14px;font-size:12px;line-height:12px;color:#1E1E1E;">AuctionType.htm</div><svg class="a" style="left:47px;top:130px;" width="6" height="10" viewBox="0 0 6 10"><path d="M0.5 0.5 L5.5 5 L0.5 9.5 Z" fill="none" stroke="#1E1E1E"/></svg><svg class="a" style="left:69px;top:128px;" width="15" height="16" viewBox="0 0 15 16"><path d="M2.5 1.5 H9 L12.5 5 V13.5 H2.5 Z M9 1.5 V5 H12.5" fill="none" stroke="#1E1E1E" stroke-width="1" stroke-dasharray="1 1.4"/></svg><div class="a t s" style="left:89px;top:130.14px;font-size:12px;line-height:12px;color:#1E1E1E;">FilterStatus.ascx</div><svg class="a" style="left:60px;top:150px;" width="6" height="8" viewBox="0 0 6 8"><path d="M1 3.5 V2.5 A1.9 1.9 0 0 1 4.8 2.2" fill="none" stroke="#1BA1E2" stroke-width="0.9"/><rect x="0.3" y="3.8" width="5" height="4.2" fill="#1BA1E2"/><rect x="2.3" y="5.3" width="1" height="1.6" fill="#fff"/></svg><svg class="a" style="left:69px;top:146px;" width="15" height="16" viewBox="0 0 15 16"><rect x="5" y="2" width="8" height="10" fill="#EEEEF8"/><path d="M4.5 10 V1.5 H10 L13.5 5 V12.5 H10" fill="none" stroke="#1E1E1E" stroke-width="1.1"/><path d="M10 1.5 L13.5 5 H10 Z" fill="#1E1E1E"/><path d="M2.3 11 L0.6 13 L2.3 15 M7.7 11 L9.4 13 L7.7 15" fill="none" stroke="#1E1E1E" stroke-width="0.9"/><circle cx="5" cy="13" r="2" fill="#0E8FE0"/></svg><div class="a t s" style="left:89px;top:148.14px;font-size:12px;line-height:12px;color:#1E1E1E;">FilterStatus.htm</div><svg class="a" style="left:60px;top:168px;" width="6" height="8" viewBox="0 0 6 8"><path d="M1 3.5 V2.5 A1.9 1.9 0 0 1 4.8 2.2" fill="none" stroke="#1BA1E2" stroke-width="0.9"/><rect x="0.3" y="3.8" width="5" height="4.2" fill="#1BA1E2"/><rect x="2.3" y="5.3" width="1" height="1.6" fill="#fff"/></svg><svg class="a" style="left:69px;top:164px;" width="15" height="16" viewBox="0 0 15 16"><rect x="5" y="2" width="8" height="10" fill="#EEEEF8"/><path d="M4.5 10 V1.5 H10 L13.5 5 V12.5 H10" fill="none" stroke="#1E1E1E" stroke-width="1.1"/><path d="M10 1.5 L13.5 5 H10 Z" fill="#1E1E1E"/><path d="M2.3 11 L0.6 13 L2.3 15 M7.7 11 L9.4 13 L7.7 15" fill="none" stroke="#1E1E1E" stroke-width="0.9"/><circle cx="5" cy="13" r="2" fill="#0E8FE0"/></svg><div class="a t s" style="left:89px;top:166.14px;font-size:12px;line-height:12px;color:#1E1E1E;">KeyWord.htm</div><svg class="a" style="left:60px;top:186px;" width="6" height="8" viewBox="0 0 6 8"><path d="M1 3.5 V2.5 A1.9 1.9 0 0 1 4.8 2.2" fill="none" stroke="#1BA1E2" stroke-width="0.9"/><rect x="0.3" y="3.8" width="5" height="4.2" fill="#1BA1E2"/><rect x="2.3" y="5.3" width="1" height="1.6" fill="#fff"/></svg><svg class="a" style="left:69px;top:182px;" width="15" height="16" viewBox="0 0 15 16"><rect x="5" y="2" width="8" height="10" fill="#EEEEF8"/><path d="M4.5 10 V1.5 H10 L13.5 5 V12.5 H10" fill="none" stroke="#1E1E1E" stroke-width="1.1"/><path d="M10 1.5 L13.5 5 H10 Z" fill="#1E1E1E"/><path d="M2.3 11 L0.6 13 L2.3 15 M7.7 11 L9.4 13 L7.7 15" fill="none" stroke="#1E1E1E" stroke-width="0.9"/><circle cx="5" cy="13" r="2" fill="#0E8FE0"/></svg><div class="a t s" style="left:89px;top:184.14px;font-size:12px;line-height:12px;color:#1E1E1E;">LotNumber.htm</div><svg class="a" style="left:60px;top:204px;" width="6" height="8" viewBox="0 0 6 8"><path d="M1 3.5 V2.5 A1.9 1.9 0 0 1 4.8 2.2" fill="none" stroke="#1BA1E2" stroke-width="0.9"/><rect x="0.3" y="3.8" width="5" height="4.2" fill="#1BA1E2"/><rect x="2.3" y="5.3" width="1" height="1.6" fill="#fff"/></svg><svg class="a" style="left:69px;top:200px;" width="15" height="16" viewBox="0 0 15 16"><rect x="5" y="2" width="8" height="10" fill="#EEEEF8"/><path d="M4.5 10 V1.5 H10 L13.5 5 V12.5 H10" fill="none" stroke="#1E1E1E" stroke-width="1.1"/><path d="M10 1.5 L13.5 5 H10 Z" fill="#1E1E1E"/><path d="M2.3 11 L0.6 13 L2.3 15 M7.7 11 L9.4 13 L7.7 15" fill="none" stroke="#1E1E1E" stroke-width="0.9"/><circle cx="5" cy="13" r="2" fill="#0E8FE0"/></svg><div class="a t s" style="left:89px;top:202.14px;font-size:12px;line-height:12px;color:#1E1E1E;">Price.htm</div><svg class="a" style="left:60px;top:222px;" width="6" height="8" viewBox="0 0 6 8"><path d="M1 3.5 V2.5 A1.9 1.9 0 0 1 4.8 2.2" fill="none" stroke="#1BA1E2" stroke-width="0.9"/><rect x="0.3" y="3.8" width="5" height="4.2" fill="#1BA1E2"/><rect x="2.3" y="5.3" width="1" height="1.6" fill="#fff"/></svg><svg class="a" style="left:69px;top:218px;" width="15" height="16" viewBox="0 0 15 16"><rect x="5" y="2" width="8" height="10" fill="#EEEEF8"/><path d="M4.5 10 V1.5 H10 L13.5 5 V12.5 H10" fill="none" stroke="#1E1E1E" stroke-width="1.1"/><path d="M10 1.5 L13.5 5 H10 Z" fill="#1E1E1E"/><path d="M2.3 11 L0.6 13 L2.3 15 M7.7 11 L9.4 13 L7.7 15" fill="none" stroke="#1E1E1E" stroke-width="0.9"/><circle cx="5" cy="13" r="2" fill="#0E8FE0"/></svg><div class="a t s" style="left:89px;top:220.14px;font-size:12px;line-height:12px;color:#1E1E1E;">PropertyType.htm</div><svg class="a" style="left:60px;top:240px;" width="6" height="8" viewBox="0 0 6 8"><path d="M1 3.5 V2.5 A1.9 1.9 0 0 1 4.8 2.2" fill="none" stroke="#1BA1E2" stroke-width="0.9"/><rect x="0.3" y="3.8" width="5" height="4.2" fill="#1BA1E2"/><rect x="2.3" y="5.3" width="1" height="1.6" fill="#fff"/></svg><svg class="a" style="left:69px;top:236px;" width="15" height="16" viewBox="0 0 15 16"><rect x="5" y="2" width="8" height="10" fill="#EEEEF8"/><path d="M4.5 10 V1.5 H10 L13.5 5 V12.5 H10" fill="none" stroke="#1E1E1E" stroke-width="1.1"/><path d="M10 1.5 L13.5 5 H10 Z" fill="#1E1E1E"/><path d="M2.3 11 L0.6 13 L2.3 15 M7.7 11 L9.4 13 L7.7 15" fill="none" stroke="#1E1E1E" stroke-width="0.9"/><circle cx="5" cy="13" r="2" fill="#0E8FE0"/></svg><div class="a t s" style="left:89px;top:238.14px;font-size:12px;line-height:12px;color:#1E1E1E;">Region.htm</div><svg class="a" style="left:60px;top:258px;" width="6" height="8" viewBox="0 0 6 8"><path d="M1 3.5 V2.5 A1.9 1.9 0 0 1 4.8 2.2" fill="none" stroke="#1BA1E2" stroke-width="0.9"/><rect x="0.3" y="3.8" width="5" height="4.2" fill="#1BA1E2"/><rect x="2.3" y="5.3" width="1" height="1.6" fill="#fff"/></svg><svg class="a" style="left:69px;top:254px;" width="15" height="16" viewBox="0 0 15 16"><rect x="5" y="2" width="8" height="10" fill="#EEEEF8"/><path d="M4.5 10 V1.5 H10 L13.5 5 V12.5 H10" fill="none" stroke="#1E1E1E" stroke-width="1.1"/><path d="M10 1.5 L13.5 5 H10 Z" fill="#1E1E1E"/><path d="M2.3 11 L0.6 13 L2.3 15 M7.7 11 L9.4 13 L7.7 15" fill="none" stroke="#1E1E1E" stroke-width="0.9"/><circle cx="5" cy="13" r="2" fill="#0E8FE0"/></svg><div class="a t s" style="left:89px;top:256.14px;font-size:12px;line-height:12px;color:#1E1E1E;">Seller.htm</div><svg class="a" style="left:32px;top:276px;" width="7" height="7" viewBox="0 0 7 7"><path d="M7 0 V7 H0 Z" fill="#1E1E1E"/></svg><svg class="a" style="left:51px;top:274px;" width="15" height="12" viewBox="0 0 15 12"><path d="M0.5 11 V1 H5 L6.5 2.5 H12.5 V5" fill="#F7F8FD" stroke="#DCB067" stroke-width="1.1"/><path d="M3 5 H14.5 L12.5 11.5 H0.5 Z" fill="#DCB067"/></svg><div class="a t s" style="left:71px;top:274.14px;font-size:12px;line-height:12px;color:#1E1E1E;">Handlers</div><svg class="a" style="left:47px;top:292px;" width="6" height="10" viewBox="0 0 6 10"><path d="M0.5 0.5 L5.5 5 L0.5 9.5 Z" fill="none" stroke="#1E1E1E"/></svg><svg class="a" style="left:60px;top:294px;" width="6" height="8" viewBox="0 0 6 8"><path d="M1 3.5 V2.5 A1.9 1.9 0 0 1 4.8 2.2" fill="none" stroke="#1BA1E2" stroke-width="0.9"/><rect x="0.3" y="3.8" width="5" height="4.2" fill="#1BA1E2"/><rect x="2.3" y="5.3" width="1" height="1.6" fill="#fff"/></svg><svg class="a" style="left:69px;top:290px;" width="16" height="16" viewBox="0 0 16 16"><path d="M0 5.5 H3 M1.5 7.5 H3 M0 9.5 H3" stroke="#1E1E1E" stroke-width="1"/><circle cx="9" cy="8" r="4.6" fill="none" stroke="#1E1E1E" stroke-width="1.2"/><path d="M7.5 3.8 V12.2 M10.5 3.8 V12.2 M4.8 6.5 H13.2 M4.8 9.5 H13.2" stroke="#1E1E1E" stroke-width="0.9"/></svg><div class="a t s" style="left:89px;top:292.14px;font-size:12px;line-height:12px;color:#1E1E1E;">AdminHandler.ashx</div><svg class="a" style="left:47px;top:310px;" width="6" height="10" viewBox="0 0 6 10"><path d="M0.5 0.5 L5.5 5 L0.5 9.5 Z" fill="none" stroke="#1E1E1E"/></svg><svg class="a" style="left:60px;top:312px;" width="6" height="8" viewBox="0 0 6 8"><path d="M1 3.5 V2.5 A1.9 1.9 0 0 1 4.8 2.2" fill="none" stroke="#1BA1E2" stroke-width="0.9"/><rect x="0.3" y="3.8" width="5" height="4.2" fill="#1BA1E2"/><rect x="2.3" y="5.3" width="1" height="1.6" fill="#fff"/></svg><svg class="a" style="left:69px;top:308px;" width="16" height="16" viewBox="0 0 16 16"><path d="M0 5.5 H3 M1.5 7.5 H3 M0 9.5 H3" stroke="#1E1E1E" stroke-width="1"/><circle cx="9" cy="8" r="4.6" fill="none" stroke="#1E1E1E" stroke-width="1.2"/><path d="M7.5 3.8 V12.2 M10.5 3.8 V12.2 M4.8 6.5 H13.2 M4.8 9.5 H13.2" stroke="#1E1E1E" stroke-width="0.9"/></svg><div class="a t s" style="left:89px;top:310.14px;font-size:12px;line-height:12px;color:#1E1E1E;">DataHandler.ashx</div><svg class="a" style="left:47px;top:328px;" width="6" height="10" viewBox="0 0 6 10"><path d="M0.5 0.5 L5.5 5 L0.5 9.5 Z" fill="none" stroke="#1E1E1E"/></svg><svg class="a" style="left:60px;top:330px;" width="6" height="8" viewBox="0 0 6 8"><path d="M1 3.5 V2.5 A1.9 1.9 0 0 1 4.8 2.2" fill="none" stroke="#1BA1E2" stroke-width="0.9"/><rect x="0.3" y="3.8" width="5" height="4.2" fill="#1BA1E2"/><rect x="2.3" y="5.3" width="1" height="1.6" fill="#fff"/></svg><svg class="a" style="left:69px;top:326px;" width="16" height="16" viewBox="0 0 16 16"><path d="M0 5.5 H3 M1.5 7.5 H3 M0 9.5 H3" stroke="#1E1E1E" stroke-width="1"/><circle cx="9" cy="8" r="4.6" fill="none" stroke="#1E1E1E" stroke-width="1.2"/><path d="M7.5 3.8 V12.2 M10.5 3.8 V12.2 M4.8 6.5 H13.2 M4.8 9.5 H13.2" stroke="#1E1E1E" stroke-width="0.9"/></svg><div class="a t s" style="left:89px;top:328.14px;font-size:12px;line-height:12px;color:#1E1E1E;">DirectHandler.ashx</div><svg class="a" style="left:47px;top:346px;" width="6" height="10" viewBox="0 0 6 10"><path d="M0.5 0.5 L5.5 5 L0.5 9.5 Z" fill="none" stroke="#1E1E1E"/></svg><svg class="a" style="left:60px;top:348px;" width="6" height="8" viewBox="0 0 6 8"><path d="M1 3.5 V2.5 A1.9 1.9 0 0 1 4.8 2.2" fill="none" stroke="#1BA1E2" stroke-width="0.9"/><rect x="0.3" y="3.8" width="5" height="4.2" fill="#1BA1E2"/><rect x="2.3" y="5.3" width="1" height="1.6" fill="#fff"/></svg><svg class="a" style="left:69px;top:344px;" width="16" height="16" viewBox="0 0 16 16"><path d="M0 5.5 H3 M1.5 7.5 H3 M0 9.5 H3" stroke="#1E1E1E" stroke-width="1"/><circle cx="9" cy="8" r="4.6" fill="none" stroke="#1E1E1E" stroke-width="1.2"/><path d="M7.5 3.8 V12.2 M10.5 3.8 V12.2 M4.8 6.5 H13.2 M4.8 9.5 H13.2" stroke="#1E1E1E" stroke-width="0.9"/></svg><div class="a t s" style="left:89px;top:346.14px;font-size:12px;line-height:12px;color:#1E1E1E;">DocumentHandler.ashx</div><svg class="a" style="left:49px;top:366px;" width="7" height="7" viewBox="0 0 7 7"><path d="M7 0 V7 H0 Z" fill="#1E1E1E"/></svg><svg class="a" style="left:60px;top:366px;" width="6" height="8" viewBox="0 0 6 8"><path d="M1 3.5 V2.5 A1.9 1.9 0 0 1 4.8 2.2" fill="none" stroke="#1BA1E2" stroke-width="0.9"/><rect x="0.3" y="3.8" width="5" height="4.2" fill="#1BA1E2"/><rect x="2.3" y="5.3" width="1" height="1.6" fill="#fff"/></svg><svg class="a" style="left:69px;top:362px;" width="16" height="16" viewBox="0 0 16 16"><path d="M0 5.5 H3 M1.5 7.5 H3 M0 9.5 H3" stroke="#1E1E1E" stroke-width="1"/><circle cx="9" cy="8" r="4.6" fill="none" stroke="#1E1E1E" stroke-width="1.2"/><path d="M7.5 3.8 V12.2 M10.5 3.8 V12.2 M4.8 6.5 H13.2 M4.8 9.5 H13.2" stroke="#1E1E1E" stroke-width="0.9"/></svg><div class="a t s" style="left:89px;top:364.14px;font-size:12px;line-height:12px;color:#1E1E1E;">EditDataHandler.ashx</div><svg class="a" style="left:65px;top:382px;" width="6" height="10" viewBox="0 0 6 10"><path d="M0.5 0.5 L5.5 5 L0.5 9.5 Z" fill="none" stroke="#1E1E1E"/></svg><svg class="a" style="left:80px;top:384px;" width="7" height="8" viewBox="0 0 7 8"><path d="M0.5 4.5 L2.5 7 L6.5 0.5" fill="none" stroke="#E51400" stroke-width="1.6"/></svg><svg class="a" style="left:87px;top:380px;" width="14" height="16" viewBox="0 0 14 16"><rect x="3" y="3" width="9" height="10.5" fill="#EEEEF8"/><path d="M2.5 8 V13.5 H12.5 V4.5 L10 2 H8" fill="none" stroke="#1E1E1E" stroke-width="1.1"/><path d="M10 2 L12.5 4.5 H10 Z" fill="#1E1E1E"/><path d="M0 4.5 H4.5" stroke="#00539C" stroke-width="2"/><path d="M3.5 1 L7.5 4.5 L3.5 8 Z" fill="#00539C"/></svg><div class="a t s" style="left:107px;top:382.14px;font-size:12px;line-height:12px;color:#1E1E1E;">EditDataHandler.ashx.cs</div><svg class="a" style="left:47px;top:400px;" width="6" height="10" viewBox="0 0 6 10"><path d="M0.5 0.5 L5.5 5 L0.5 9.5 Z" fill="none" stroke="#1E1E1E"/></svg><svg class="a" style="left:60px;top:402px;" width="6" height="8" viewBox="0 0 6 8"><path d="M1 3.5 V2.5 A1.9 1.9 0 0 1 4.8 2.2" fill="none" stroke="#1BA1E2" stroke-width="0.9"/><rect x="0.3" y="3.8" width="5" height="4.2" fill="#1BA1E2"/><rect x="2.3" y="5.3" width="1" height="1.6" fill="#fff"/></svg><svg class="a" style="left:69px;top:398px;" width="16" height="16" viewBox="0 0 16 16"><path d="M0 5.5 H3 M1.5 7.5 H3 M0 9.5 H3" stroke="#1E1E1E" stroke-width="1"/><circle cx="9" cy="8" r="4.6" fill="none" stroke="#1E1E1E" stroke-width="1.2"/><path d="M7.5 3.8 V12.2 M10.5 3.8 V12.2 M4.8 6.5 H13.2 M4.8 9.5 H13.2" stroke="#1E1E1E" stroke-width="0.9"/></svg><div class="a t s" style="left:89px;top:400.14px;font-size:12px;line-height:12px;color:#1E1E1E;">GetControl.ashx</div><svg class="a" style="left:47px;top:418px;" width="6" height="10" viewBox="0 0 6 10"><path d="M0.5 0.5 L5.5 5 L0.5 9.5 Z" fill="none" stroke="#1E1E1E"/></svg><svg class="a" style="left:60px;top:420px;" width="6" height="8" viewBox="0 0 6 8"><path d="M1 3.5 V2.5 A1.9 1.9 0 0 1 4.8 2.2" fill="none" stroke="#1BA1E2" stroke-width="0.9"/><rect x="0.3" y="3.8" width="5" height="4.2" fill="#1BA1E2"/><rect x="2.3" y="5.3" width="1" height="1.6" fill="#fff"/></svg><svg class="a" style="left:69px;top:416px;" width="16" height="16" viewBox="0 0 16 16"><path d="M0 5.5 H3 M1.5 7.5 H3 M0 9.5 H3" stroke="#1E1E1E" stroke-width="1"/><circle cx="9" cy="8" r="4.6" fill="none" stroke="#1E1E1E" stroke-width="1.2"/><path d="M7.5 3.8 V12.2 M10.5 3.8 V12.2 M4.8 6.5 H13.2 M4.8 9.5 H13.2" stroke="#1E1E1E" stroke-width="0.9"/></svg><div class="a t s" style="left:89px;top:418.14px;font-size:12px;line-height:12px;color:#1E1E1E;">GetOrganizationTemplate.ashx</div><svg class="a" style="left:47px;top:436px;" width="6" height="10" viewBox="0 0 6 10"><path d="M0.5 0.5 L5.5 5 L0.5 9.5 Z" fill="none" stroke="#1E1E1E"/></svg><svg class="a" style="left:60px;top:438px;" width="6" height="8" viewBox="0 0 6 8"><path d="M1 3.5 V2.5 A1.9 1.9 0 0 1 4.8 2.2" fill="none" stroke="#1BA1E2" stroke-width="0.9"/><rect x="0.3" y="3.8" width="5" height="4.2" fill="#1BA1E2"/><rect x="2.3" y="5.3" width="1" height="1.6" fill="#fff"/></svg><svg class="a" style="left:69px;top:434px;" width="16" height="16" viewBox="0 0 16 16"><path d="M0 5.5 H3 M1.5 7.5 H3 M0 9.5 H3" stroke="#1E1E1E" stroke-width="1"/><circle cx="9" cy="8" r="4.6" fill="none" stroke="#1E1E1E" stroke-width="1.2"/><path d="M7.5 3.8 V12.2 M10.5 3.8 V12.2 M4.8 6.5 H13.2 M4.8 9.5 H13.2" stroke="#1E1E1E" stroke-width="0.9"/></svg><div class="a t s" style="left:89px;top:436.14px;font-size:12px;line-height:12px;color:#1E1E1E;">RegistryHandler.ashx</div><svg class="a" style="left:47px;top:454px;" width="6" height="10" viewBox="0 0 6 10"><path d="M0.5 0.5 L5.5 5 L0.5 9.5 Z" fill="none" stroke="#1E1E1E"/></svg><svg class="a" style="left:60px;top:456px;" width="6" height="8" viewBox="0 0 6 8"><path d="M1 3.5 V2.5 A1.9 1.9 0 0 1 4.8 2.2" fill="none" stroke="#1BA1E2" stroke-width="0.9"/><rect x="0.3" y="3.8" width="5" height="4.2" fill="#1BA1E2"/><rect x="2.3" y="5.3" width="1" height="1.6" fill="#fff"/></svg><svg class="a" style="left:69px;top:452px;" width="16" height="16" viewBox="0 0 16 16"><path d="M0 5.5 H3 M1.5 7.5 H3 M0 9.5 H3" stroke="#1E1E1E" stroke-width="1"/><circle cx="9" cy="8" r="4.6" fill="none" stroke="#1E1E1E" stroke-width="1.2"/><path d="M7.5 3.8 V12.2 M10.5 3.8 V12.2 M4.8 6.5 H13.2 M4.8 9.5 H13.2" stroke="#1E1E1E" stroke-width="0.9"/></svg><div class="a t s" style="left:89px;top:454.14px;font-size:12px;line-height:12px;color:#1E1E1E;">requester.ashx</div><svg class="a" style="left:29px;top:472px;" width="6" height="10" viewBox="0 0 6 10"><path d="M0.5 0.5 L5.5 5 L0.5 9.5 Z" fill="none" stroke="#1E1E1E"/></svg><svg class="a" style="left:51px;top:472px;" width="14" height="12" viewBox="0 0 14 12"><path d="M0 0.5 H5 L6.5 2 H13.5 V11.5 H0 Z" fill="#DCB067"/><path d="M1 2.5 H5.5" stroke="#F3E2C0" stroke-width="0.8"/></svg><div class="a t s" style="left:71px;top:472.14px;font-size:12px;line-height:12px;color:#1E1E1E;">images</div><svg class="a" style="left:29px;top:490px;" width="6" height="10" viewBox="0 0 6 10"><path d="M0.5 0.5 L5.5 5 L0.5 9.5 Z" fill="none" stroke="#1E1E1E"/></svg><svg class="a" style="left:51px;top:490px;" width="14" height="12" viewBox="0 0 14 12"><path d="M0 0.5 H5 L6.5 2 H13.5 V11.5 H0 Z" fill="#DCB067"/><path d="M1 2.5 H5.5" stroke="#F3E2C0" stroke-width="0.8"/></svg><div class="a t s" style="left:71px;top:490.14px;font-size:12px;line-height:12px;color:#1E1E1E;">Js</div><svg class="a" style="left:29px;top:508px;" width="6" height="10" viewBox="0 0 6 10"><path d="M0.5 0.5 L5.5 5 L0.5 9.5 Z" fill="none" stroke="#1E1E1E"/></svg><svg class="a" style="left:51px;top:508px;" width="14" height="12" viewBox="0 0 14 12"><path d="M0 0.5 H5 L6.5 2 H13.5 V11.5 H0 Z" fill="#DCB067"/><path d="M1 2.5 H5.5" stroke="#F3E2C0" stroke-width="0.8"/></svg><div class="a t s" style="left:71px;top:508.14px;font-size:12px;line-height:12px;color:#1E1E1E;">Log</div><svg class="a" style="left:32px;top:528px;" width="7" height="7" viewBox="0 0 7 7"><path d="M7 0 V7 H0 Z" fill="#1E1E1E"/></svg><svg class="a" style="left:51px;top:526px;" width="15" height="12" viewBox="0 0 15 12"><path d="M0.5 11 V1 H5 L6.5 2.5 H12.5 V5" fill="#F7F8FD" stroke="#DCB067" stroke-width="1.1"/><path d="M3 5 H14.5 L12.5 11.5 H0.5 Z" fill="#DCB067"/></svg><div class="a t s" style="left:71px;top:526.14px;font-size:12px;line-height:12px;color:#1E1E1E;">ModalView</div><svg class="a" style="left:47px;top:544px;" width="6" height="10" viewBox="0 0 6 10"><path d="M0.5 0.5 L5.5 5 L0.5 9.5 Z" fill="none" stroke="#1E1E1E"/></svg><svg class="a" style="left:60px;top:546px;" width="6" height="8" viewBox="0 0 6 8"><path d="M1 3.5 V2.5 A1.9 1.9 0 0 1 4.8 2.2" fill="none" stroke="#1BA1E2" stroke-width="0.9"/><rect x="0.3" y="3.8" width="5" height="4.2" fill="#1BA1E2"/><rect x="2.3" y="5.3" width="1" height="1.6" fill="#fff"/></svg><svg class="a" style="left:69px;top:542px;" width="16" height="16" viewBox="0 0 16 16"><circle cx="4.5" cy="10.5" r="4.6" fill="#1BA1E2"/><path d="M0 10.5 H9 M4.5 6 V15 M2.6 6.5 V14.5 M6.4 6.5 V14.5 M0.5 8.6 H8.5 M0.5 12.4 H8.5" stroke="#F7F8FD" stroke-width="0.6"/><circle cx="10.5" cy="3.5" r="2.4" fill="#424242"/><path d="M9.5 7 H14 V12 H9.8 V10 Z" fill="#424242"/></svg><div class="a t s" style="left:89px;top:544.14px;font-size:12px;line-height:12px;color:#1E1E1E;">ModalBidToLot.ascx</div><svg class="a" style="left:47px;top:562px;" width="6" height="10" viewBox="0 0 6 10"><path d="M0.5 0.5 L5.5 5 L0.5 9.5 Z" fill="none" stroke="#1E1E1E"/></svg><svg class="a" style="left:60px;top:564px;" width="6" height="8" viewBox="0 0 6 8"><path d="M1 3.5 V2.5 A1.9 1.9 0 0 1 4.8 2.2" fill="none" stroke="#1BA1E2" stroke-width="0.9"/><rect x="0.3" y="3.8" width="5" height="4.2" fill="#1BA1E2"/><rect x="2.3" y="5.3" width="1" height="1.6" fill="#fff"/></svg><svg class="a" style="left:69px;top:560px;" width="16" height="16" viewBox="0 0 16 16"><circle cx="4.5" cy="10.5" r="4.6" fill="#1BA1E2"/><path d="M0 10.5 H9 M4.5 6 V15 M2.6 6.5 V14.5 M6.4 6.5 V14.5 M0.5 8.6 H8.5 M0.5 12.4 H8.5" stroke="#F7F8FD" stroke-width="0.6"/><circle cx="10.5" cy="3.5" r="2.4" fill="#424242"/><path d="M9.5 7 H14 V12 H9.8 V10 Z" fill="#424242"/></svg><div class="a t s" style="left:89px;top:562.14px;font-size:12px;line-height:12px;color:#1E1E1E;">ModalChangeUser.ascx</div><svg class="a" style="left:47px;top:580px;" width="6" height="10" viewBox="0 0 6 10"><path d="M0.5 0.5 L5.5 5 L0.5 9.5 Z" fill="none" stroke="#1E1E1E"/></svg><svg class="a" style="left:60px;top:582px;" width="6" height="8" viewBox="0 0 6 8"><path d="M1 3.5 V2.5 A1.9 1.9 0 0 1 4.8 2.2" fill="none" stroke="#1BA1E2" stroke-width="0.9"/><rect x="0.3" y="3.8" width="5" height="4.2" fill="#1BA1E2"/><rect x="2.3" y="5.3" width="1" height="1.6" fill="#fff"/></svg><svg class="a" style="left:69px;top:578px;" width="16" height="16" viewBox="0 0 16 16"><circle cx="4.5" cy="10.5" r="4.6" fill="#1BA1E2"/><path d="M0 10.5 H9 M4.5 6 V15 M2.6 6.5 V14.5 M6.4 6.5 V14.5 M0.5 8.6 H8.5 M0.5 12.4 H8.5" stroke="#F7F8FD" stroke-width="0.6"/><circle cx="10.5" cy="3.5" r="2.4" fill="#424242"/><path d="M9.5 7 H14 V12 H9.8 V10 Z" fill="#424242"/></svg><div class="a t s" style="left:89px;top:580.14px;font-size:12px;line-height:12px;color:#1E1E1E;">ModalConfirmDialog.ascx</div><svg class="a" style="left:47px;top:598px;" width="6" height="10" viewBox="0 0 6 10"><path d="M0.5 0.5 L5.5 5 L0.5 9.5 Z" fill="none" stroke="#1E1E1E"/></svg><svg class="a" style="left:60px;top:600px;" width="6" height="8" viewBox="0 0 6 8"><path d="M1 3.5 V2.5 A1.9 1.9 0 0 1 4.8 2.2" fill="none" stroke="#1BA1E2" stroke-width="0.9"/><rect x="0.3" y="3.8" width="5" height="4.2" fill="#1BA1E2"/><rect x="2.3" y="5.3" width="1" height="1.6" fill="#fff"/></svg><svg class="a" style="left:69px;top:596px;" width="16" height="16" viewBox="0 0 16 16"><circle cx="4.5" cy="10.5" r="4.6" fill="#1BA1E2"/><path d="M0 10.5 H9 M4.5 6 V15 M2.6 6.5 V14.5 M6.4 6.5 V14.5 M0.5 8.6 H8.5 M0.5 12.4 H8.5" stroke="#F7F8FD" stroke-width="0.6"/><circle cx="10.5" cy="3.5" r="2.4" fill="#424242"/><path d="M9.5 7 H14 V12 H9.8 V10 Z" fill="#424242"/></svg><div class="a t s" style="left:89px;top:598.14px;font-size:12px;line-height:12px;color:#1E1E1E;">ModalFileList.ascx</div><svg class="a" style="left:47px;top:616px;" width="6" height="10" viewBox="0 0 6 10"><path d="M0.5 0.5 L5.5 5 L0.5 9.5 Z" fill="none" stroke="#1E1E1E"/></svg><svg class="a" style="left:60px;top:618px;" width="6" height="8" viewBox="0 0 6 8"><path d="M1 3.5 V2.5 A1.9 1.9 0 0 1 4.8 2.2" fill="none" stroke="#1BA1E2" stroke-width="0.9"/><rect x="0.3" y="3.8" width="5" height="4.2" fill="#1BA1E2"/><rect x="2.3" y="5.3" width="1" height="1.6" fill="#fff"/></svg><svg class="a" style="left:69px;top:614px;" width="16" height="16" viewBox="0 0 16 16"><circle cx="4.5" cy="10.5" r="4.6" fill="#1BA1E2"/><path d="M0 10.5 H9 M4.5 6 V15 M2.6 6.5 V14.5 M6.4 6.5 V14.5 M0.5 8.6 H8.5 M0.5 12.4 H8.5" stroke="#F7F8FD" stroke-width="0.6"/><circle cx="10.5" cy="3.5" r="2.4" fill="#424242"/><path d="M9.5 7 H14 V12 H9.8 V10 Z" fill="#424242"/></svg><div class="a t s" style="left:89px;top:616.14px;font-size:12px;line-height:12px;color:#1E1E1E;">ModalFileUpload.ascx</div><svg class="a" style="left:47px;top:634px;" width="6" height="10" viewBox="0 0 6 10"><path d="M0.5 0.5 L5.5 5 L0.5 9.5 Z" fill="none" stroke="#1E1E1E"/></svg><svg class="a" style="left:60px;top:636px;" width="6" height="8" viewBox="0 0 6 8"><path d="M1 3.5 V2.5 A1.9 1.9 0 0 1 4.8 2.2" fill="none" stroke="#1BA1E2" stroke-width="0.9"/><rect x="0.3" y="3.8" width="5" height="4.2" fill="#1BA1E2"/><rect x="2.3" y="5.3" width="1" height="1.6" fill="#fff"/></svg><svg class="a" style="left:69px;top:632px;" width="16" height="16" viewBox="0 0 16 16"><circle cx="4.5" cy="10.5" r="4.6" fill="#1BA1E2"/><path d="M0 10.5 H9 M4.5 6 V15 M2.6 6.5 V14.5 M6.4 6.5 V14.5 M0.5 8.6 H8.5 M0.5 12.4 H8.5" stroke="#F7F8FD" stroke-width="0.6"/><circle cx="10.5" cy="3.5" r="2.4" fill="#424242"/><path d="M9.5 7 H14 V12 H9.8 V10 Z" fill="#424242"/></svg><div class="a t s" style="left:89px;top:634.14px;font-size:12px;line-height:12px;color:#1E1E1E;">ModalLogin.ascx</div><svg class="a" style="left:47px;top:652px;" width="6" height="10" viewBox="0 0 6 10"><path d="M0.5 0.5 L5.5 5 L0.5 9.5 Z" fill="none" stroke="#1E1E1E"/></svg><svg class="a" style="left:60px;top:654px;" width="6" height="8" viewBox="0 0 6 8"><path d="M1 3.5 V2.5 A1.9 1.9 0 0 1 4.8 2.2" fill="none" stroke="#1BA1E2" stroke-width="0.9"/><rect x="0.3" y="3.8" width="5" height="4.2" fill="#1BA1E2"/><rect x="2.3" y="5.3" width="1" height="1.6" fill="#fff"/></svg><svg class="a" style="left:69px;top:650px;" width="16" height="16" viewBox="0 0 16 16"><circle cx="4.5" cy="10.5" r="4.6" fill="#1BA1E2"/><path d="M0 10.5 H9 M4.5 6 V15 M2.6 6.5 V14.5 M6.4 6.5 V14.5 M0.5 8.6 H8.5 M0.5 12.4 H8.5" stroke="#F7F8FD" stroke-width="0.6"/><circle cx="10.5" cy="3.5" r="2.4" fill="#424242"/><path d="M9.5 7 H14 V12 H9.8 V10 Z" fill="#424242"/></svg><div class="a t s" style="left:89px;top:652.14px;font-size:12px;line-height:12px;color:#1E1E1E;">ModalLotDescription.ascx</div><svg class="a" style="left:47px;top:670px;" width="6" height="10" viewBox="0 0 6 10"><path d="M0.5 0.5 L5.5 5 L0.5 9.5 Z" fill="none" stroke="#1E1E1E"/></svg><svg class="a" style="left:60px;top:672px;" width="6" height="8" viewBox="0 0 6 8"><path d="M1 3.5 V2.5 A1.9 1.9 0 0 1 4.8 2.2" fill="none" stroke="#1BA1E2" stroke-width="0.9"/><rect x="0.3" y="3.8" width="5" height="4.2" fill="#1BA1E2"/><rect x="2.3" y="5.3" width="1" height="1.6" fill="#fff"/></svg><svg class="a" style="left:69px;top:668px;" width="16" height="16" viewBox="0 0 16 16"><circle cx="4.5" cy="10.5" r="4.6" fill="#1BA1E2"/><path d="M0 10.5 H9 M4.5 6 V15 M2.6 6.5 V14.5 M6.4 6.5 V14.5 M0.5 8.6 H8.5 M0.5 12.4 H8.5" stroke="#F7F8FD" stroke-width="0.6"/><circle cx="10.5" cy="3.5" r="2.4" fill="#424242"/><path d="M9.5 7 H14 V12 H9.8 V10 Z" fill="#424242"/></svg><div class="a t s" style="left:89px;top:670.14px;font-size:12px;line-height:12px;color:#1E1E1E;">ModalLotNotify.ascx</div></div><div class="a" style="left:1530px;top:857px;width:100px;height:20px;background:#F7F8FD;"></div><div class="a t s " style="left:1535px;top:861.97px;font-size:11.85px;line-height:11.85px;color:#1E1E1E;">Solution Explorer</div><div class="a" style="left:1631px;top:857px;width:75px;height:19px;background:#3D5184;"></div><div class="a t s " style="left:1637px;top:861.97px;font-size:11.85px;line-height:11.85px;color:#FFFFFF;">Git Changes</div><div class="a" style="left:1708px;top:857px;width:84px;height:19px;background:#3D5184;"></div><div class="a t s " style="left:1713px;top:861.97px;font-size:11.85px;line-height:11.85px;color:#FFFFFF;">Team Explorer</div><div class="a" style="left:1530px;top:885px;width:383px;height:21px;background:#3F5189;"></div><div class="a t s " style="left:1534px;top:889.97px;font-size:11.85px;line-height:11.85px;color:#FFFFFF;">Properties</div><svg class="a" style="left:1865px;top:894px;" width="9" height="5" viewBox="0 0 9 5"><path d="M0 0 H9 L4.5 5 Z" fill="#CED4EE"/></svg><svg class="a" style="left:1882px;top:891px;" width="8" height="11" viewBox="0 0 8 11"><path d="M1.5 0.5 H6.5 M2.5 0.5 V6 M5.5 0.5 V6 M0.5 6.5 H7.5 M4 6.5 V11" fill="none" stroke="#CED4EE" stroke-width="1.1"/></svg><svg class="a" style="left:1897px;top:891px;" width="10" height="10" viewBox="0 0 10 10"><path d="M0.5 0.5 L9.5 9.5 M9.5 0.5 L0.5 9.5" stroke="#CED4EE" stroke-width="1.2"/></svg><div class="a" style="left:1530px;top:906px;width:383px;height:104px;background:#F7F8FD;"></div><svg class="a" style="left:1903px;top:918px;" width="6" height="3" viewBox="0 0 6 3"><path d="M0 0 H6 L3 3 Z" fill="#1E1E1E"/></svg><div class="a" style="left:1531px;top:931px;width:381px;height:25px;background:#CCD5F0;"></div><div class="a" style="left:1533px;top:933px;width:23px;height:22px;background:#FFEFC8;box-sizing:border-box;border:1px solid #8C6A10;"></div><svg class="a" style="left:1537px;top:937px;" width="14" height="14" viewBox="0 0 14 14"><rect x="0.5" y="0.5" width="4" height="4" fill="none" stroke="#1E1E1E"/><rect x="0.5" y="8.5" width="4" height="4" fill="none" stroke="#1E1E1E"/><path d="M1.5 2.5 H3.5 M1.5 10.5 H3.5 M6 1 H13 M6 3.5 H13 M6 6 H13 M6 9 H13 M6 11.5 H13" stroke="#1E1E1E"/></svg><svg class="a" style="left:1560px;top:936px;" width="14" height="15" viewBox="0 0 14 15"><path d="M0.5 6 L2.5 0.5 L4.5 6 M1.2 4 H3.8 M0.5 8.5 H4.5 L0.5 14 H4.5" fill="none" stroke="#1E1E1E" stroke-width="1"/><path d="M10 1 V13 M7 10 L10 13.5 L13 10" fill="none" stroke="#00539C" stroke-width="1.6"/></svg><div class="a" style="left:1582px;top:935px;width:1px;height:19px;background:#A0ABD0;"></div><svg class="a" style="left:1588px;top:936px;" width="14" height="14" viewBox="0 0 14 14"><path d="M2 12.5 L8 6.5" stroke="#9A9EAE" stroke-width="2.6" stroke-linecap="round"/><path d="M6.5 6 A4 4 0 0 1 12 1 L9.5 3.5 L10.5 4.5 L13 2 A4 4 0 0 1 8 7.5 Z" fill="#9A9EAE"/></svg><div class="a" style="left:1531px;top:975px;width:381px;height:1px;background:#E3E5EE;"></div><div class="a t s " style="left:1599px;top:948.24px;font-size:19.8px;line-height:19.8px;color:rgba(110,110,120,0.55);">Activate Windows</div><div class="a t s " style="left:1599px;top:973.30px;font-size:15px;line-height:15px;color:rgba(110,110,120,0.55);">Go to Settings to activate Windows.</div><div class="a" style="left:7px;top:982px;width:1515px;height:8px;background:#3F5189;"></div><div class="a" style="left:0;top:982px;width:1522px;height:8px;overflow:hidden;"><div class="a t s " style="left:11px;top:6.47px;font-size:11.85px;line-height:11.85px;color:#FFFFFF;">Find "UrlReferrer"</div><svg class="a" style="left:1490px;top:2px;" width="6" height="6" viewBox="0 0 6 6"><path d="M1 0 V6 M5 0 V6 M0 6 H6" stroke="#CED4EE"/></svg><svg class="a" style="left:1506px;top:2px;" width="8" height="6" viewBox="0 0 8 6"><path d="M0.5 0.5 L7.5 6 M7.5 0.5 L0.5 6" stroke="#CED4EE"/></svg></div><div class="a" style="left:7px;top:990px;width:1515px;height:0px;"></div><div class="a" style="left:7px;top:991px;width:88px;height:18px;background:#3D5184;"></div><div class="a t s " style="left:13px;top:993.97px;font-size:11.85px;line-height:11.85px;color:#FFFFFF;">'sql' references</div><div class="a" style="left:97px;top:991px;width:150px;height:18px;background:#3D5184;"></div><div class="a t s " style="left:103px;top:993.97px;font-size:11.85px;line-height:11.85px;color:#FFFFFF;">Package Manager Console</div><div class="a" style="left:249px;top:990px;width:102px;height:20px;background:#F7F8FD;"></div><div class="a t s " style="left:255px;top:993.97px;font-size:11.85px;line-height:11.85px;color:#1E1E1E;">Find "UrlReferrer"</div><div class="a" style="left:353px;top:991px;width:51px;height:18px;background:#3D5184;"></div><div class="a t s " style="left:359px;top:993.97px;font-size:11.85px;line-height:11.85px;color:#FFFFFF;">Threads</div><div class="a" style="left:405px;top:991px;width:44px;height:18px;background:#3D5184;"></div><div class="a t s " style="left:411px;top:993.97px;font-size:11.85px;line-height:11.85px;color:#FFFFFF;">Locals</div><div class="a" style="left:451px;top:991px;width:53px;height:18px;background:#3D5184;"></div><div class="a t s " style="left:457px;top:993.97px;font-size:11.85px;line-height:11.85px;color:#FFFFFF;">Watch 1</div><div class="a" style="left:506px;top:991px;width:41px;height:18px;background:#3D5184;"></div><div class="a t s " style="left:512px;top:993.97px;font-size:11.85px;line-height:11.85px;color:#FFFFFF;">Autos</div><div class="a" style="left:549px;top:991px;width:96px;height:18px;background:#3D5184;"></div><div class="a t s " style="left:555px;top:993.97px;font-size:11.85px;line-height:11.85px;color:#FFFFFF;">Diagnostic Tools</div><div class="a" style="left:647px;top:991px;width:61px;height:18px;background:#3D5184;"></div><div class="a t s " style="left:653px;top:993.97px;font-size:11.85px;line-height:11.85px;color:#FFFFFF;">Call Stack</div><div class="a" style="left:710px;top:991px;width:72px;height:18px;background:#3D5184;"></div><div class="a t s " style="left:716px;top:993.97px;font-size:11.85px;line-height:11.85px;color:#FFFFFF;">Breakpoints</div><div class="a" style="left:784px;top:991px;width:107px;height:18px;background:#3D5184;"></div><div class="a t s " style="left:790px;top:993.97px;font-size:11.85px;line-height:11.85px;color:#FFFFFF;">Exception Settings</div><div class="a" style="left:893px;top:991px;width:48px;height:18px;background:#3D5184;"></div><div class="a t s " style="left:899px;top:993.97px;font-size:11.85px;line-height:11.85px;color:#FFFFFF;">Output</div><div class="a" style="left:943px;top:991px;width:56px;height:18px;background:#3D5184;"></div><div class="a t s " style="left:949px;top:993.97px;font-size:11.85px;line-height:11.85px;color:#FFFFFF;">Error List</div><div class="a" style="left:1001px;top:991px;width:53px;height:18px;background:#3D5184;"></div><div class="a t s " style="left:1007px;top:993.97px;font-size:11.85px;line-height:11.85px;color:#FFFFFF;">Task List</div><div class="a" style="left:7px;top:990px;width:242px;height:1px;background:#5D6B99;"></div><div class="a" style="left:0px;top:1017px;width:1920px;height:23px;background:#A04B41;"></div><div class="a" style="left:0px;top:1040px;width:835px;height:3px;background:#263030;"></div><div class="a" style="left:835px;top:1040px;width:44px;height:3px;background:#646868;"></div><div class="a" style="left:879px;top:1040px;width:1041px;height:3px;background:#404344;"></div><svg class="a" style="left:6px;top:1023px;" width="14" height="11" viewBox="0 0 14 11"><path d="M3.5 0.5 H13.5 L10.5 10.5 H0.5 Z" fill="none" stroke="#FFFFFF" stroke-width="1.2"/></svg><div class="a t s " style="left:28px;top:1022.84px;font-size:12px;line-height:12px;color:#FFFFFF;">Ready</div><svg class="a" style="left:1578px;top:1022px;" width="11" height="12" viewBox="0 0 11 12"><path d="M5.5 12 V1.5 M1 5.5 L5.5 1 L10 5.5" fill="none" stroke="#FFFFFF" stroke-width="1.6"/></svg><div class="a t s " style="left:1597px;top:1022.84px;font-size:12px;line-height:12px;color:#FFFFFF;">10</div><svg class="a" style="left:1615px;top:1026px;" width="8" height="4" viewBox="0 0 8 4"><path d="M0 4 L4 0 L8 4 Z" fill="#FFFFFF"/></svg><svg class="a" style="left:1647px;top:1022px;" width="13" height="12" viewBox="0 0 13 12"><path d="M1 11 L2 8 L9 1 L11 3 L4 10 Z" fill="none" stroke="#FFFFFF" stroke-width="1.3"/></svg><div class="a t s " style="left:1667px;top:1022.84px;font-size:12px;line-height:12px;color:#FFFFFF;">14</div><svg class="a" style="left:1701px;top:1021px;" width="15" height="15" viewBox="0 0 15 15"><path d="M7.5 0.5 L14.5 7.5 L7.5 14.5 L0.5 7.5 Z" fill="#FFFFFF"/><circle cx="6" cy="5.5" r="1.3" fill="#A04B41"/><circle cx="6" cy="10" r="1.3" fill="#A04B41"/><circle cx="9.5" cy="8" r="1.3" fill="#A04B41"/><path d="M6 5.5 V10 M6 5.5 L9.5 8" stroke="#A04B41"/></svg><div class="a t s " style="left:1723px;top:1022.84px;font-size:12px;line-height:12px;color:#FFFFFF;">WEB</div><svg class="a" style="left:1753px;top:1026px;" width="8" height="4" viewBox="0 0 8 4"><path d="M0 4 L4 0 L8 4 Z" fill="#FFFFFF"/></svg><svg class="a" style="left:1783px;top:1021px;" width="15" height="14" viewBox="0 0 15 14"><path d="M7.5 14 V7 L1.5 1 M7.5 7 L13.5 1 M1 4 V0.8 H4 M11 0.8 H14 V4" fill="none" stroke="#FFFFFF" stroke-width="1.3"/></svg><div class="a t s " style="left:1805px;top:1022.84px;font-size:12px;line-height:12px;color:#FFFFFF;">master</div><svg class="a" style="left:1847px;top:1026px;" width="8" height="4" viewBox="0 0 8 4"><path d="M0 4 L4 0 L8 4 Z" fill="#FFFFFF"/></svg><svg class="a" style="left:1881px;top:1020px;" width="14" height="13" viewBox="0 0 14 13"><path d="M2 10 C3 8 2.5 3 7 2.5 C11.5 3 11 8 12 10 Z" fill="#FFFFFF"/><path d="M6 11.5 H8" stroke="#FFFFFF"/></svg><svg class="a" style="left:1889px;top:1026px;" width="12" height="12" viewBox="0 0 12 12"><circle cx="6" cy="6" r="5.5" fill="#FFFFFF" stroke="#A04B41"/><text x="6" y="9.5" font-size="9" text-anchor="middle" font-family="Liberation Sans" fill="#1E1E1E">2</text></svg><div class="a" style="left:526px;top:223px;width:1394px;height:33px;background:#F5F7FD;box-sizing:border-box;border:1px solid #A3ABC0;border-radius:2px;"></div><svg class="a" style="left:539px;top:234px;" width="12" height="13" viewBox="0 0 12 13"><path d="M6 0.5 L11.5 3.5 V9.5 L6 12.5 L0.5 9.5 V3.5 Z" fill="none" stroke="#652D90"/><path d="M0.5 3.5 L6 6.5 L11.5 3.5 M6 6.5 V12.5" fill="none" stroke="#652D90"/></svg><div class="a t s" style="left:559px;top:234.27px;font-size:11.85px;line-height:11.85px;"><span style="color:#2B91AF">Tuple</span><span style="color:#000">&lt;</span><span style="color:#0000FF">string</span><span style="color:#000">, </span><span style="color:#0000FF">string</span><span style="color:#000">, </span><span style="color:#0000FF">int</span><span style="color:#000">, </span><span style="color:#0000FF">int</span><span style="color:#000">, </span><span style="color:#0000FF">int</span><span style="color:#000">&gt; </span><span style="color:#2B91AF">EditDataHandler</span><span style="color:#000">.</span><span style="color:#74531F">CreateFullSqlRequest</span><span style="color:#000">(</span><span style="color:#2B91AF">UserDM</span><span style="color:#1F377F"> cUserDM</span><span style="color:#000">, </span><span style="color:#2B91AF">NameValueCollection</span><span style="color:#1F377F"> nvc</span><span style="color:#000">, </span><span style="color:#0000FF">string</span><span style="color:#1F377F"> type_filter</span><span style="color:#000">, </span><span style="color:#0000FF">string</span><span style="color:#1F377F"> filter_type</span><span style="color:#000">, </span><span style="color:#0000FF">string</span><span style="color:#1F377F"> rows</span><span style="color:#000">, </span><span style="color:#0000FF">string</span><span style="color:#1F377F"> sidx</span><span style="color:#000">, </span><span style="color:#0000FF">string</span><span style="color:#1F377F"> sord</span><span style="color:#000">, </span><span style="color:#0000FF">string</span><span style="color:#1F377F"> action</span><span style="color:#000">, </span><span style="color:#0000FF">string</span><span style="color:#1F377F"> list_mark</span><span style="color:#000">, </span><span style="color:#0000FF">string</span><span style="color:#1F377F"> cLang</span><span style="color:#000">, </span><span style="color:#0000FF">string</span><span style="color:#1F377F"> page</span><span style="color:#000">, </span><span style="color:#0000FF">string</span><span style="color:#1F377F"> query</span><span style="color:#000">)</span></div><svg class="a" style="left:522px;top:206px;" width="10" height="18" viewBox="0 0 10 18"><path d="M1 0.5 H4 L5 1.5 L6 0.5 H9 M5 1.5 V16.5 M1 17.5 H4 L5 16.5 L6 17.5 H9" fill="none" stroke="#000" stroke-width="1.1"/></svg>
</body></html>
